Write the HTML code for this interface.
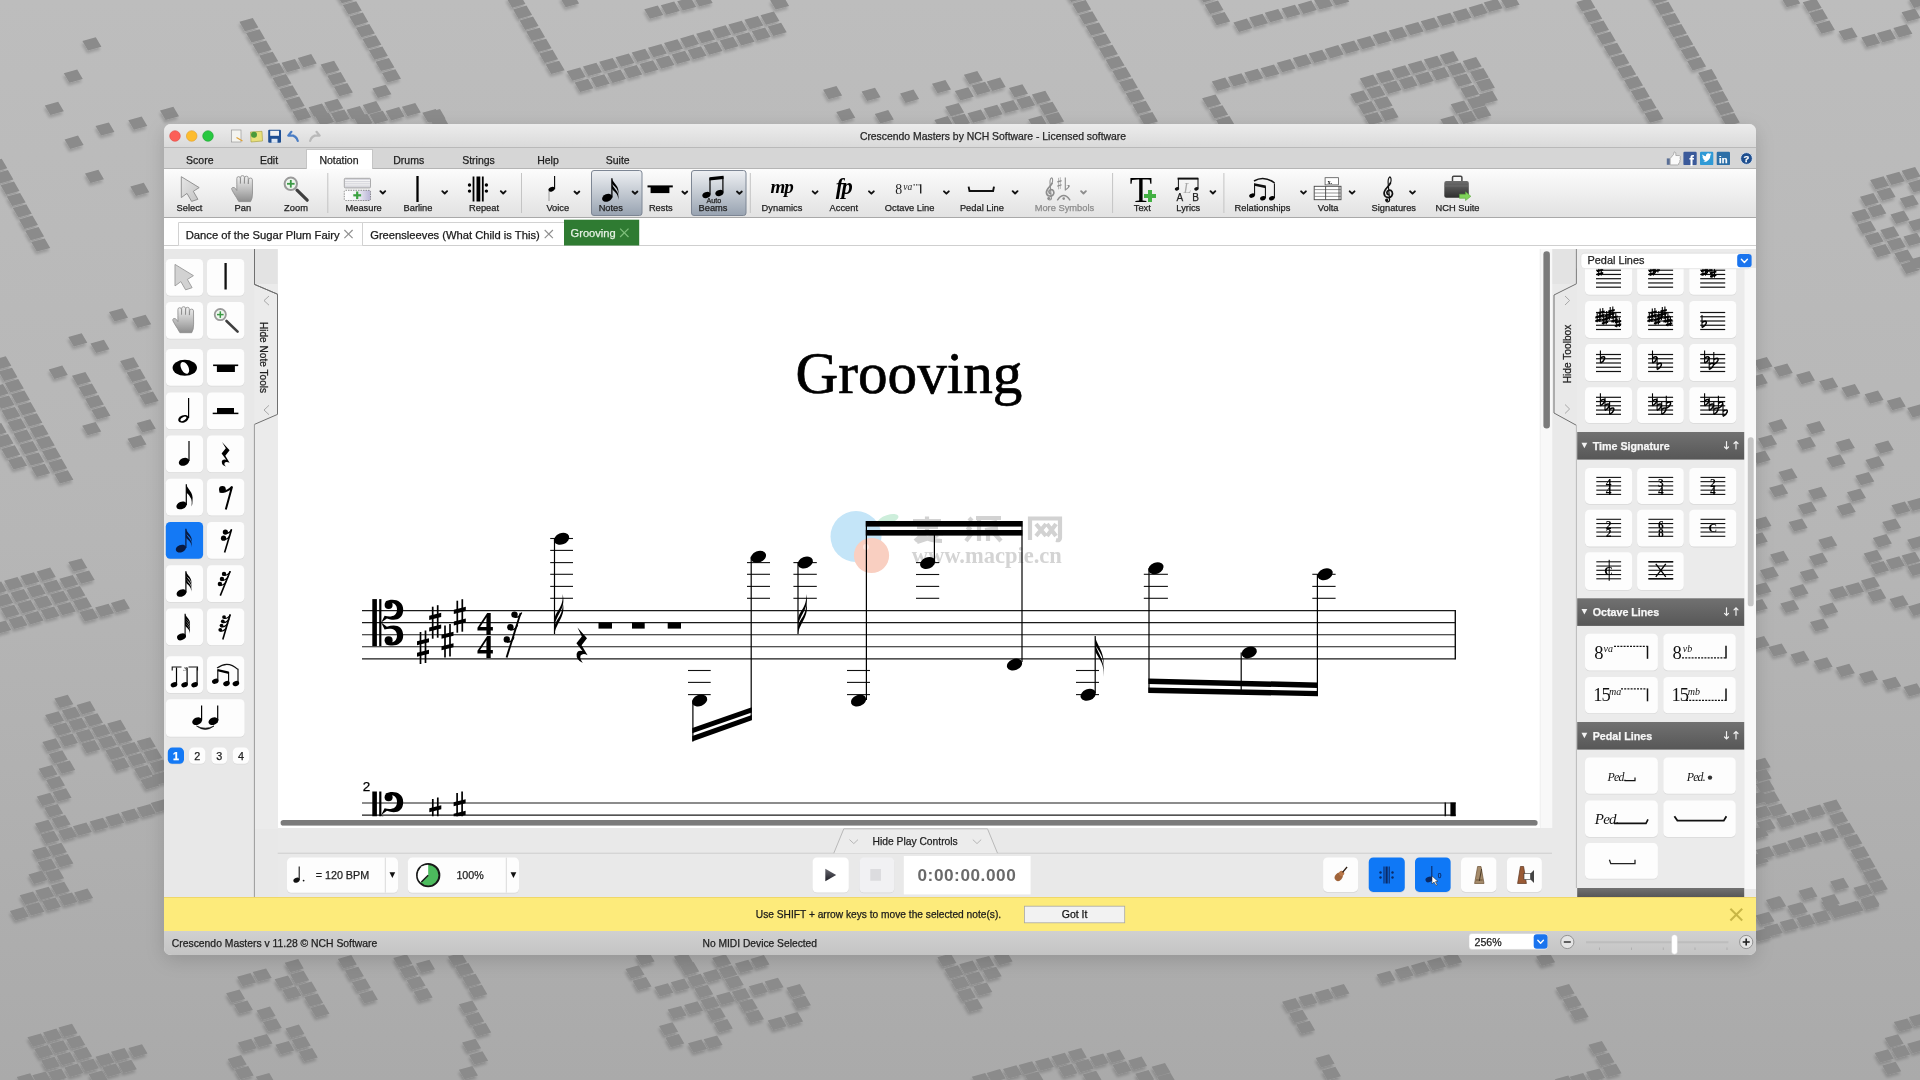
<!DOCTYPE html>
<html><head><meta charset="utf-8"><style>html,body{margin:0;padding:0;width:1920px;height:1080px;overflow:hidden;background:#b9b9b9}svg{display:block}text{white-space:pre}</style></head><body>
<svg width="1920" height="1080" viewBox="0 0 1920 1080" font-family="Liberation Sans"><defs><linearGradient id="gBg" x1="0" y1="0" x2="0" y2="1"><stop offset="0" stop-color="#bdbdbd"/><stop offset="0.5" stop-color="#b6b6b6"/><stop offset="1" stop-color="#aaaaaa"/></linearGradient>
<linearGradient id="gBgV" x1="0" y1="0" x2="0" y2="1"><stop offset="0" stop-color="#000" stop-opacity="0"/><stop offset="0.7" stop-color="#000" stop-opacity="0.03"/><stop offset="1" stop-color="#000" stop-opacity="0.16"/></linearGradient>
<filter id="sqsh" x="-50%" y="-50%" width="200%" height="200%"><feGaussianBlur in="SourceAlpha" stdDeviation="1.6"/><feOffset dx="-1" dy="2.5"/><feComponentTransfer><feFuncA type="linear" slope="0.18"/></feComponentTransfer><feMerge><feMergeNode/><feMergeNode in="SourceGraphic"/></feMerge></filter>
<linearGradient id="gTitle" x1="0" y1="0" x2="0" y2="1"><stop offset="0" stop-color="#ececec"/><stop offset="1" stop-color="#dadada"/></linearGradient>
<linearGradient id="gTool" x1="0" y1="0" x2="0" y2="1"><stop offset="0" stop-color="#fcfcfc"/><stop offset="1" stop-color="#e2e2e2"/></linearGradient>
<linearGradient id="gStatus" x1="0" y1="0" x2="0" y2="1"><stop offset="0" stop-color="#d0d0d0"/><stop offset="1" stop-color="#c4c4c4"/></linearGradient>
<filter id="wshadow" x="-10%" y="-10%" width="120%" height="130%"><feGaussianBlur in="SourceAlpha" stdDeviation="10"/><feOffset dy="5"/><feComponentTransfer><feFuncA type="linear" slope="0.15"/></feComponentTransfer><feMerge><feMergeNode/><feMergeNode in="SourceGraphic"/></feMerge></filter>
<clipPath id="winclip"><rect x="164" y="124" width="1592" height="831" rx="7"/></clipPath>
<linearGradient id="gSel" x1="0" y1="0" x2="0" y2="1"><stop offset="0" stop-color="#eef0f3"/><stop offset="1" stop-color="#98a3b1"/></linearGradient>
<linearGradient id="gArrow" x1="0" y1="0" x2="1" y2="1"><stop offset="0" stop-color="#e6e6e6"/><stop offset="1" stop-color="#c4c4c4"/></linearGradient>
<linearGradient id="gHand" x1="0" y1="0" x2="0" y2="1"><stop offset="0" stop-color="#f4f4f4"/><stop offset="1" stop-color="#8e8e8e"/></linearGradient>
<linearGradient id="gBrief" x1="0" y1="0" x2="0" y2="1"><stop offset="0" stop-color="#6d6d6d"/><stop offset="1" stop-color="#2e2e2e"/></linearGradient>
<linearGradient id="gMeas" x1="0" y1="0" x2="1" y2="0"><stop offset="0" stop-color="#ffffff"/><stop offset=".5" stop-color="#f2f2f6"/><stop offset="1" stop-color="#b8b4d6"/></linearGradient>
<linearGradient id="gLogoB" x1="0" y1="0" x2="1" y2="1"><stop offset="0" stop-color="#c4e6f8"/><stop offset="1" stop-color="#b5def6"/></linearGradient>
<clipPath id="clipScore"><rect x="278" y="249" width="1262" height="567.2"/></clipPath>
<linearGradient id="gHdr" x1="0" y1="0" x2="0" y2="1"><stop offset="0" stop-color="#717171"/><stop offset="1" stop-color="#575757"/></linearGradient>
<linearGradient id="gPlay" x1="0" y1="0" x2="0" y2="1"><stop offset="0" stop-color="#6a6a72"/><stop offset="1" stop-color="#1c1c24"/></linearGradient></defs>
<rect x="0" y="0" width="1920" height="1080" fill="url(#gBg)"/>
<path d="M82.4 40.9L95.8 37.2L101.4 46.7L88.0 50.4ZM63.8 73.2L77.2 69.5L82.8 79.0L69.4 82.7ZM44.8 105.4L58.2 101.7L63.8 111.2L50.4 114.9ZM160.0 110.4L173.4 106.7L179.0 116.2L165.6 119.9ZM128.3 120.3L141.7 116.6L147.3 126.1L133.9 129.8ZM95.5 126.1L108.9 122.4L114.5 131.9L101.1 135.6ZM239.4 21.8L252.8 18.0L258.4 27.5L244.9 31.3ZM246.0 33.0L259.5 29.2L265.0 38.7L251.6 42.5ZM252.6 44.2L266.1 40.5L271.6 49.9L258.2 53.7ZM259.2 55.4L272.7 51.7L278.2 61.2L264.8 64.9ZM265.9 66.6L279.3 62.9L284.9 72.4L271.4 76.1ZM272.5 77.9L285.9 74.1L291.5 83.6L278.0 87.3ZM279.1 89.1L292.5 85.3L298.1 94.8L284.7 98.6ZM285.7 100.3L299.2 96.5L304.7 106.0L291.3 109.8ZM292.3 111.5L305.8 107.7L311.3 117.2L297.9 121.0ZM281.5 62.7L295.0 59.0L300.5 68.4L287.1 72.2ZM297.8 57.9L311.2 54.1L316.7 63.6L303.3 67.4ZM320.6 64.5L334.1 60.8L339.6 70.3L326.2 74.0ZM327.2 75.7L340.7 71.9L346.2 81.4L332.8 85.2ZM333.9 86.8L347.3 83.0L352.9 92.5L339.4 96.3ZM336.3 -6.2L349.7 -10.0L355.3 -0.5L341.8 3.3ZM342.8 5.1L356.2 1.3L361.8 10.8L348.4 14.6ZM349.3 16.4L362.8 12.6L368.3 22.1L354.9 25.9ZM355.9 27.7L369.3 23.9L374.9 33.4L361.4 37.2ZM362.4 39.0L375.8 35.2L381.4 44.7L368.0 48.5ZM368.9 50.3L382.4 46.6L387.9 56.1L374.5 59.8ZM375.5 61.7L388.9 57.9L394.5 67.4L381.0 71.1ZM382.0 73.0L395.4 69.2L401.0 78.7L387.6 82.5ZM372.4 88.6L385.8 84.8L391.4 94.3L377.9 98.1ZM308.6 107.3L322.0 103.5L327.6 113.0L314.1 116.8ZM324.2 102.5L337.7 98.7L343.2 108.2L329.8 111.9ZM346.5 109.7L359.9 105.9L365.5 115.4L352.0 119.2ZM362.8 104.9L376.2 101.1L381.7 110.6L368.3 114.3ZM385.6 110.9L399.1 107.1L404.6 116.6L391.2 120.4ZM401.9 106.7L415.3 102.9L420.8 112.4L407.4 116.2ZM422.3 112.7L435.8 108.9L441.3 118.4L427.9 122.2ZM315.2 116.3L328.7 112.5L334.2 122.0L320.8 125.8ZM330.9 113.3L344.3 109.5L349.8 119.0L336.4 122.8ZM353.7 117.5L367.2 113.7L372.7 123.2L359.3 127.0ZM369.4 114.5L382.8 110.7L388.4 120.2L374.9 124.0ZM506.6 -1.7L520.0 -5.4L525.5 4.1L512.1 7.8ZM513.1 9.4L526.5 5.6L532.1 15.1L518.6 18.9ZM519.6 20.4L533.0 16.6L538.6 26.1L525.1 29.9ZM526.1 31.4L539.6 27.7L545.1 37.2L531.7 40.9ZM532.6 42.5L546.1 38.7L551.6 48.2L538.2 52.0ZM539.2 53.5L552.6 49.7L558.1 59.2L544.7 63.0ZM545.7 64.5L559.1 60.8L564.7 70.3L551.2 74.0ZM566.7 71.2L580.2 67.4L585.7 76.9L572.3 80.7ZM583.0 66.5L596.4 62.7L602.0 72.2L588.5 76.0ZM599.2 61.8L612.7 58.1L618.2 67.5L604.8 71.3ZM615.5 57.2L628.9 53.4L634.5 62.9L621.0 66.7ZM631.7 52.5L645.2 48.7L650.7 58.2L637.3 62.0ZM574.6 82.6L588.0 78.8L593.5 88.3L580.1 92.1ZM590.8 78.0L604.2 74.2L609.8 83.7L596.3 87.5ZM607.1 73.4L620.5 69.6L626.0 79.1L612.6 82.9ZM623.3 68.8L636.7 65.0L642.3 74.5L628.8 78.2ZM560.1 -2.3L573.6 -6.0L579.1 3.5L565.7 7.2ZM426.5 112.7L440.0 108.9L445.5 118.4L432.1 122.2ZM430.7 121.1L444.2 117.3L449.7 126.8L436.3 130.6ZM648.0 47.7L661.4 43.9L666.9 53.4L653.5 57.2ZM664.0 43.0L677.5 39.3L683.0 48.8L669.6 52.5ZM680.1 38.4L693.5 34.6L699.1 44.1L685.7 47.9ZM696.2 33.8L709.6 30.0L715.2 39.5L701.7 43.3ZM712.3 29.1L725.7 25.3L731.2 34.8L717.8 38.6ZM728.3 24.5L741.8 20.7L747.3 30.2L733.9 34.0ZM744.4 19.8L757.9 16.1L763.4 25.6L750.0 29.3ZM760.5 15.2L773.9 11.4L779.5 20.9L766.0 24.7ZM639.5 63.9L653.0 60.2L658.5 69.7L645.1 73.4ZM655.6 59.3L669.0 55.5L674.5 65.0L661.1 68.8ZM671.6 54.6L685.0 50.8L690.6 60.3L677.1 64.1ZM687.6 49.9L701.0 46.2L706.6 55.7L693.1 59.4ZM703.6 45.3L717.1 41.5L722.6 51.0L709.2 54.8ZM719.6 40.6L733.1 36.8L738.6 46.3L725.2 50.1ZM735.7 36.0L749.1 32.2L754.6 41.7L741.2 45.4ZM751.7 31.3L765.1 27.5L770.7 37.0L757.2 40.8ZM767.7 26.6L781.1 22.8L786.7 32.3L773.3 36.1ZM644.3 9.2L657.8 5.4L663.3 14.9L649.9 18.7ZM660.8 5.2L674.2 1.4L679.8 10.9L666.3 14.7ZM677.2 1.2L690.7 -2.6L696.2 6.9L682.8 10.6ZM693.7 -2.9L707.1 -6.6L712.7 2.9L699.2 6.6ZM770.1 0.2L783.6 -3.6L789.1 5.9L775.7 9.6ZM823.1 89.8L836.5 86.0L842.1 95.5L828.6 99.3ZM836.3 112.1L849.7 108.3L855.3 117.8L841.9 121.6ZM861.6 91.6L875.0 87.8L880.6 97.3L867.1 101.1ZM900.1 93.4L913.5 89.6L919.1 99.1L905.6 102.9ZM932.0 83.8L945.4 80.0L951.0 89.5L937.5 93.3ZM874.8 113.9L888.2 110.1L893.8 119.6L880.4 123.4ZM963.9 74.8L977.3 71.0L982.9 80.5L969.4 84.3ZM954.8 91.0L968.3 87.2L973.8 96.7L960.4 100.5ZM971.7 85.6L985.1 81.8L990.7 91.3L977.2 95.1ZM986.7 81.4L1000.2 77.6L1005.7 87.1L992.3 90.9ZM1009.0 88.0L1022.4 84.2L1028.0 93.7L1014.5 97.5ZM1031.9 94.6L1045.3 90.8L1050.8 100.3L1037.4 104.1ZM945.2 106.7L958.7 102.9L964.2 112.4L950.8 116.2ZM1016.2 99.4L1029.7 95.7L1035.2 105.2L1021.8 108.9ZM1039.1 105.5L1052.5 101.7L1058.1 111.2L1044.6 115.0ZM967.5 113.3L980.9 109.5L986.5 119.0L973.0 122.8ZM983.7 108.5L997.2 104.7L1002.7 114.2L989.3 118.0ZM1000.0 103.7L1013.4 99.9L1019.0 109.4L1005.5 113.1ZM951.2 117.5L964.7 113.7L970.2 123.2L956.8 127.0ZM1045.1 115.7L1058.5 111.9L1064.1 121.4L1050.6 125.2ZM934.4 119.9L947.8 116.1L953.4 125.6L939.9 129.4ZM1028.3 119.3L1041.7 115.5L1047.2 125.0L1033.8 128.8ZM1065.6 -7.4L1079.0 -11.2L1084.5 -1.7L1071.1 2.1ZM1072.2 3.8L1085.7 -0.0L1091.2 9.5L1077.8 13.3ZM1078.9 15.0L1092.3 11.2L1097.9 20.7L1084.4 24.4ZM1085.6 26.1L1099.0 22.4L1104.6 31.9L1091.1 35.6ZM1092.2 37.3L1105.7 33.6L1111.2 43.1L1097.8 46.8ZM1098.9 48.5L1112.4 44.8L1117.9 54.2L1104.5 58.0ZM1105.6 59.7L1119.0 55.9L1124.6 65.4L1111.1 69.2ZM1112.3 70.9L1125.7 67.1L1131.3 76.6L1117.8 80.4ZM1118.9 82.1L1132.4 78.3L1137.9 87.8L1124.5 91.6ZM1125.6 93.3L1139.1 89.5L1144.6 99.0L1131.2 102.8ZM1132.3 104.5L1145.7 100.7L1151.3 110.2L1137.8 114.0ZM1139.0 115.7L1152.4 111.9L1157.9 121.4L1144.5 125.2ZM1197.9 -7.1L1211.4 -10.8L1216.9 -1.4L1203.5 2.4ZM1204.6 4.4L1218.0 0.6L1223.5 10.1L1210.1 13.9ZM1211.2 15.8L1224.6 12.0L1230.2 21.5L1216.7 25.3ZM1233.4 22.4L1246.9 18.6L1252.4 28.1L1239.0 31.9ZM1249.1 17.6L1262.5 13.8L1268.1 23.3L1254.6 27.1ZM1264.7 12.8L1278.2 9.0L1283.7 18.5L1270.3 22.3ZM1211.8 81.4L1225.2 77.6L1230.8 87.1L1217.3 90.9ZM1228.0 77.0L1241.5 73.2L1247.0 82.7L1233.6 86.5ZM1244.3 72.6L1257.7 68.8L1263.3 78.3L1249.8 82.1ZM1260.5 68.2L1274.0 64.4L1279.5 73.9L1266.1 77.6ZM1202.1 98.2L1215.6 94.5L1221.1 104.0L1207.7 107.7ZM1209.1 109.1L1222.5 105.3L1228.1 114.8L1214.6 118.6ZM1216.0 119.9L1229.4 116.1L1235.0 125.6L1221.5 129.4ZM1281.6 8.6L1295.0 4.8L1300.6 14.3L1287.1 18.1ZM1297.8 4.4L1311.3 0.6L1316.8 10.1L1303.4 13.9ZM1314.1 0.2L1327.5 -3.6L1333.0 5.9L1319.6 9.6ZM1330.3 -4.1L1343.8 -7.8L1349.3 1.7L1335.9 5.4ZM1276.8 62.7L1290.2 59.0L1295.7 68.4L1282.3 72.2ZM1292.8 58.1L1306.2 54.3L1311.7 63.8L1298.3 67.6ZM1308.7 53.5L1322.2 49.7L1327.7 59.2L1314.3 63.0ZM1324.7 48.9L1338.2 45.1L1343.7 54.6L1330.3 58.4ZM1340.7 44.3L1354.2 40.5L1359.7 50.0L1346.3 53.8ZM1356.7 39.7L1370.2 35.9L1375.7 45.4L1362.3 49.2ZM1372.7 35.1L1386.2 31.3L1391.7 40.8L1378.3 44.5ZM1388.7 30.4L1402.2 26.7L1407.7 36.2L1394.3 39.9ZM1404.7 25.8L1418.2 22.0L1423.7 31.5L1410.3 35.3ZM1420.7 21.2L1434.2 17.4L1439.7 26.9L1426.3 30.7ZM1436.7 16.6L1450.2 12.8L1455.7 22.3L1442.3 26.1ZM1452.7 12.0L1466.2 8.2L1471.7 17.7L1458.3 21.5ZM1468.7 7.4L1482.2 3.6L1487.7 13.1L1474.3 16.9ZM1359.8 78.4L1373.2 74.6L1378.8 84.1L1365.3 87.9ZM1375.8 73.7L1389.2 69.9L1394.8 79.4L1381.3 83.2ZM1391.8 69.0L1405.2 65.2L1410.8 74.7L1397.4 78.5ZM1407.8 64.3L1421.3 60.5L1426.8 70.0L1413.4 73.8ZM1423.8 59.6L1437.3 55.8L1442.8 65.3L1429.4 69.1ZM1439.8 54.9L1453.3 51.1L1458.8 60.6L1445.4 64.4ZM1382.7 84.4L1396.1 80.6L1401.6 90.1L1388.2 93.9ZM1398.8 79.9L1412.2 76.1L1417.7 85.6L1404.3 89.4ZM1414.9 75.4L1428.3 71.6L1433.8 81.1L1420.4 84.9ZM1431.0 70.9L1444.4 67.1L1449.9 76.6L1436.5 80.4ZM1447.1 66.3L1460.5 62.6L1466.0 72.1L1452.6 75.8ZM1462.7 60.9L1476.1 57.1L1481.7 66.6L1468.2 70.4ZM1469.9 71.8L1483.4 68.0L1488.9 77.5L1475.5 81.3ZM1475.9 82.0L1489.4 78.2L1494.9 87.7L1481.5 91.5ZM1453.1 77.2L1466.5 73.4L1472.1 82.9L1458.6 86.7ZM1460.3 88.6L1473.7 84.8L1479.3 94.3L1465.8 98.1ZM1466.9 99.4L1480.3 95.7L1485.9 105.2L1472.5 108.9ZM1472.3 109.7L1485.8 105.9L1491.3 115.4L1477.9 119.2ZM1450.7 104.3L1464.1 100.5L1469.6 110.0L1456.2 113.7ZM1457.9 114.5L1471.3 110.7L1476.9 120.2L1463.4 124.0ZM1440.4 119.3L1453.9 115.5L1459.4 125.0L1446.0 128.8ZM1478.9 94.6L1492.4 90.8L1497.9 100.3L1484.5 104.1ZM1350.2 94.0L1363.6 90.2L1369.2 99.7L1355.7 103.5ZM1366.4 89.2L1379.9 85.4L1385.4 94.9L1372.0 98.7ZM1358.0 104.9L1371.4 101.1L1377.0 110.6L1363.5 114.3ZM1373.6 100.0L1387.1 96.3L1392.6 105.8L1379.2 109.5ZM1364.0 115.7L1377.4 111.9L1383.0 121.4L1369.6 125.2ZM1379.7 111.5L1393.1 107.7L1398.6 117.2L1385.2 121.0ZM1483.7 2.6L1497.2 -1.2L1502.7 8.3L1489.3 12.1ZM1500.6 -1.1L1514.0 -4.8L1519.6 4.7L1506.1 8.4ZM1576.4 2.0L1589.9 -1.8L1595.4 7.7L1582.0 11.5ZM1583.2 13.1L1596.7 9.3L1602.2 18.8L1588.8 22.6ZM1590.0 24.2L1603.5 20.4L1609.0 29.9L1595.6 33.7ZM1596.8 35.4L1610.3 31.6L1615.8 41.1L1602.4 44.8ZM1603.6 46.5L1617.1 42.7L1622.6 52.2L1609.2 56.0ZM1610.4 57.6L1623.9 53.8L1629.4 63.3L1616.0 67.1ZM1617.2 68.8L1630.7 65.0L1636.2 74.5L1622.8 78.2ZM1624.0 79.9L1637.5 76.1L1643.0 85.6L1629.6 89.4ZM1630.8 91.0L1644.3 87.2L1649.8 96.7L1636.4 100.5ZM1637.6 102.1L1651.1 98.4L1656.6 107.9L1643.2 111.6ZM1644.4 113.3L1657.9 109.5L1663.4 119.0L1650.0 122.8ZM1648.6 -5.5L1662.1 -9.3L1667.6 0.2L1654.2 4.0ZM1655.0 5.6L1668.5 1.8L1674.0 11.3L1660.6 15.1ZM1661.5 16.6L1674.9 12.9L1680.4 22.4L1667.0 26.1ZM1667.9 27.7L1681.3 23.9L1686.9 33.4L1673.4 37.2ZM1674.3 38.8L1687.7 35.0L1693.3 44.5L1679.8 48.3ZM1680.7 49.9L1694.2 46.1L1699.7 55.6L1686.3 59.3ZM1687.1 60.9L1700.6 57.1L1706.1 66.6L1692.7 70.4ZM1698.1 72.7L1711.6 68.9L1717.1 78.4L1703.7 82.2ZM1703.8 83.7L1717.3 80.0L1722.8 89.5L1709.4 93.2ZM1709.5 94.8L1722.9 91.0L1728.5 100.5L1715.0 104.3ZM1715.1 105.8L1728.6 102.0L1734.1 111.5L1720.7 115.3ZM1720.8 116.8L1734.3 113.0L1739.8 122.5L1726.4 126.3ZM1781.3 -2.2L1794.7 -6.0L1800.3 3.5L1786.8 7.3ZM1802.7 2.2L1816.1 -1.6L1821.7 7.9L1808.2 11.7ZM1809.0 12.9L1822.4 9.1L1828.0 18.6L1814.5 22.4ZM1815.9 24.2L1829.4 20.4L1834.9 29.9L1821.5 33.7ZM1838.6 31.2L1852.0 27.4L1857.6 36.9L1844.1 40.6ZM1861.3 37.5L1874.7 33.7L1880.2 43.2L1866.8 46.9ZM1877.0 33.0L1890.4 29.3L1896.0 38.8L1882.5 42.5ZM1893.4 28.0L1906.8 24.2L1912.4 33.7L1898.9 37.5ZM1901.6 12.3L1915.0 8.5L1920.5 18.0L1907.1 21.8ZM1908.5 -1.6L1921.9 -5.4L1927.5 4.1L1914.0 7.9ZM64.6 139.4L78.0 135.6L83.6 145.1L70.1 148.9ZM85.0 173.6L98.4 169.8L103.9 179.3L90.5 183.1ZM130.3 186.6L143.8 182.8L149.3 192.3L135.9 196.1ZM-11.7 162.5L1.7 158.7L7.3 168.2L-6.2 172.0ZM-5.6 173.9L7.9 170.1L13.4 179.6L-0.0 183.4ZM0.6 185.3L14.0 181.5L19.5 191.0L6.1 194.8ZM6.7 196.6L20.1 192.9L25.7 202.4L12.2 206.1ZM12.8 208.0L26.3 204.2L31.8 213.7L18.4 217.5ZM19.0 219.4L32.4 215.6L38.0 225.1L24.5 228.9ZM25.1 230.8L38.6 227.0L44.1 236.5L30.7 240.3ZM31.2 242.1L44.7 238.4L50.2 247.9L36.8 251.6ZM109.0 312.0L122.5 308.2L128.0 317.7L114.6 321.5ZM132.2 318.4L145.6 314.7L151.2 324.2L137.7 327.9ZM68.3 337.0L81.7 333.2L87.3 342.7L73.8 346.5ZM90.5 343.4L103.9 339.7L109.5 349.2L96.1 352.9ZM48.8 369.4L62.3 365.6L67.8 375.1L54.4 378.9ZM82.2 425.8L95.6 422.1L101.2 431.6L87.7 435.3ZM136.8 423.1L150.2 419.3L155.8 428.8L142.3 432.6ZM127.5 438.8L141.0 435.0L146.5 444.5L133.1 448.3ZM72.0 375.8L85.4 372.1L91.0 381.6L77.5 385.3ZM78.5 387.3L91.9 383.5L97.5 393.0L84.0 396.8ZM85.0 398.7L98.4 394.9L103.9 404.4L90.5 408.2ZM91.4 410.1L104.9 406.3L110.4 415.8L97.0 419.6ZM120.1 361.0L133.6 357.3L139.1 366.7L125.7 370.5ZM126.6 372.5L140.1 368.7L145.6 378.2L132.2 381.9ZM133.1 383.9L146.5 380.1L152.1 389.6L138.6 393.4ZM139.6 395.3L153.0 391.5L158.6 401.0L145.1 404.8ZM-7.6 360.1L5.8 356.3L11.3 365.8L-2.1 369.6ZM-1.4 371.5L12.0 367.7L17.5 377.2L4.1 381.0ZM4.8 382.9L18.2 379.1L23.8 388.6L10.3 392.4ZM11.0 394.3L24.4 390.5L30.0 400.0L16.5 403.8ZM17.2 405.7L30.6 401.9L36.2 411.4L22.7 415.2ZM23.4 417.1L36.8 413.3L42.4 422.8L28.9 426.5ZM29.6 428.4L43.0 424.7L48.6 434.2L35.1 437.9ZM35.8 439.8L49.2 436.0L54.8 445.5L41.3 449.3ZM42.0 451.2L55.4 447.4L61.0 456.9L47.5 460.7ZM48.2 462.6L61.6 458.8L67.2 468.3L53.7 472.1ZM54.4 474.0L67.8 470.2L73.4 479.7L59.9 483.5ZM-10.4 387.9L3.0 384.1L8.6 393.6L-4.9 397.4ZM-4.5 399.3L9.0 395.5L14.5 405.0L1.1 408.8ZM1.5 410.6L14.9 406.9L20.5 416.3L7.0 420.1ZM7.4 422.0L20.9 418.2L26.4 427.7L13.0 431.5ZM13.4 433.4L26.8 429.6L32.4 439.1L18.9 442.9ZM19.3 444.8L32.8 441.0L38.3 450.5L24.9 454.3ZM25.3 456.1L38.7 452.4L44.3 461.9L30.8 465.6ZM31.2 467.5L44.7 463.7L50.2 473.2L36.8 477.0ZM-12.3 426.8L1.2 423.0L6.7 432.5L-6.7 436.3ZM-5.5 437.9L8.0 434.1L13.5 443.6L0.1 447.4ZM1.3 449.0L14.8 445.2L20.3 454.7L6.9 458.5ZM8.1 460.1L21.5 456.3L27.1 465.8L13.6 469.6ZM36.8 571.4L50.2 567.6L55.8 577.1L42.3 580.9ZM20.4 576.0L33.9 572.3L39.4 581.7L26.0 585.5ZM4.1 580.7L17.5 576.9L23.1 586.4L9.6 590.2ZM-12.3 585.3L1.2 581.5L6.7 591.0L-6.7 594.8ZM75.7 574.2L89.1 570.4L94.7 579.9L81.2 583.7ZM59.4 578.8L72.8 575.0L78.4 584.5L64.9 588.3ZM43.1 583.4L56.5 579.7L62.1 589.2L48.6 592.9ZM26.8 588.1L40.2 584.3L45.8 593.8L32.3 597.6ZM10.5 592.7L23.9 588.9L29.5 598.4L16.1 602.2ZM-5.8 597.3L7.7 593.5L13.2 603.0L-0.2 606.8ZM66.4 589.9L79.9 586.1L85.4 595.6L72.0 599.4ZM50.0 594.6L63.4 590.8L69.0 600.3L55.5 604.0ZM33.6 599.2L47.0 595.4L52.5 604.9L39.1 608.7ZM17.1 603.8L30.6 600.0L36.1 609.5L22.7 613.3ZM0.7 608.4L14.1 604.7L19.7 614.2L6.2 617.9ZM72.9 601.0L86.4 597.3L91.9 606.7L78.5 610.5ZM56.8 605.7L70.2 601.9L75.8 611.4L62.3 615.2ZM40.7 610.3L54.1 606.5L59.7 616.0L46.2 619.8ZM24.6 614.9L38.0 611.1L43.6 620.6L30.1 624.4ZM8.5 619.6L21.9 615.8L27.5 625.3L14.0 629.0ZM-7.6 624.2L5.8 620.4L11.3 629.9L-2.1 633.7ZM79.4 612.1L92.8 608.4L98.4 617.9L84.9 621.6ZM95.1 607.5L108.6 603.7L114.1 613.2L100.7 617.0ZM110.9 602.9L124.3 599.1L129.9 608.6L116.4 612.4ZM68.3 562.1L81.7 558.4L87.3 567.9L73.8 571.6ZM54.4 698.4L67.8 694.7L73.4 704.2L59.9 707.9ZM45.1 715.1L58.6 711.3L64.1 720.8L50.7 724.6ZM61.8 710.5L75.2 706.7L80.8 716.2L67.3 720.0ZM76.6 704.9L90.1 701.1L95.6 710.6L82.2 714.4ZM52.5 726.2L66.0 722.4L71.5 731.9L58.1 735.7ZM68.3 721.6L81.7 717.8L87.3 727.3L73.8 731.1ZM84.0 717.0L97.5 713.2L103.0 722.7L89.6 726.5ZM59.0 737.3L72.5 733.5L78.0 743.0L64.6 746.8ZM75.7 732.7L89.1 728.9L94.7 738.4L81.2 742.2ZM91.4 728.1L104.9 724.3L110.4 733.8L97.0 737.6ZM107.2 723.4L120.6 719.7L126.2 729.2L112.7 732.9ZM81.2 743.8L94.7 740.0L100.2 749.5L86.8 753.3ZM97.9 739.2L111.4 735.4L116.9 744.9L103.5 748.7ZM113.7 734.6L127.1 730.8L132.6 740.3L119.2 744.0ZM105.3 750.3L118.8 746.5L124.3 756.0L110.9 759.8ZM121.1 745.7L134.5 741.9L140.0 751.4L126.6 755.2ZM136.8 741.0L150.2 737.3L155.8 746.7L142.3 750.5ZM110.9 761.4L124.3 757.6L129.9 767.1L116.4 770.9ZM127.5 756.8L141.0 753.0L146.5 762.5L133.1 766.3ZM143.3 752.1L156.7 748.4L162.3 757.9L148.8 761.6ZM134.0 768.8L147.5 765.0L153.0 774.5L139.6 778.3ZM149.8 763.3L163.2 759.5L168.8 769.0L155.3 772.7ZM140.5 779.9L153.9 776.1L159.5 785.6L146.1 789.4ZM151.6 775.3L165.1 771.5L170.6 781.0L157.2 784.8ZM42.4 742.0L55.8 738.2L61.3 747.7L47.9 751.5ZM48.8 754.0L62.3 750.2L67.8 759.7L54.4 763.5ZM56.2 764.2L69.7 760.4L75.2 769.9L61.8 773.7ZM38.7 768.8L52.1 765.0L57.6 774.5L44.2 778.3ZM46.1 779.9L59.5 776.1L65.0 785.6L51.6 789.4ZM52.5 792.0L66.0 788.2L71.5 797.7L58.1 801.5ZM36.8 796.6L50.2 792.8L55.8 802.3L42.3 806.1ZM44.2 807.7L57.7 803.9L63.2 813.4L49.8 817.2ZM35.0 823.4L48.4 819.7L53.9 829.2L40.5 832.9ZM51.6 818.8L65.1 815.0L70.6 824.5L57.2 828.3ZM40.5 834.6L53.9 830.8L59.5 840.3L46.1 844.0ZM32.2 850.3L45.6 846.5L51.2 856.0L37.7 859.8ZM47.9 846.6L61.4 842.8L66.9 852.3L53.5 856.1ZM37.7 862.3L51.2 858.5L56.7 868.0L43.3 871.8ZM54.4 857.7L67.8 853.9L73.4 863.4L59.9 867.2ZM28.5 874.4L41.9 870.6L47.5 880.1L34.0 883.9ZM45.1 872.5L58.6 868.7L64.1 878.2L50.7 882.0ZM58.1 830.8L71.5 827.1L77.1 836.6L63.6 840.3ZM72.9 826.2L86.4 822.4L91.9 831.9L78.5 835.7ZM89.6 821.6L103.0 817.8L108.6 827.3L95.1 831.1ZM105.3 817.0L118.8 813.2L124.3 822.7L110.9 826.5ZM121.1 812.3L134.5 808.5L140.0 818.0L126.6 821.8ZM136.8 807.7L150.2 803.9L155.8 813.4L142.3 817.2ZM150.7 803.1L164.1 799.3L169.7 808.8L156.2 812.6ZM50.8 885.6L64.2 881.8L69.8 891.3L56.3 895.1ZM35.2 890.5L48.7 886.7L54.2 896.2L40.8 900.0ZM19.7 895.3L33.1 891.6L38.7 901.0L25.2 904.8ZM58.5 896.3L72.0 892.5L77.5 902.0L64.1 905.8ZM42.0 901.2L55.5 897.4L61.0 906.9L47.6 910.7ZM25.5 906.0L38.9 902.2L44.5 911.7L31.0 915.5ZM9.9 910.9L23.4 907.1L28.9 916.6L15.5 920.4ZM74.1 892.4L87.5 888.6L93.1 898.1L79.6 901.9ZM58.5 1027.5L72.0 1023.7L77.5 1033.2L64.1 1037.0ZM43.0 1032.4L56.4 1028.6L62.0 1038.1L48.5 1041.9ZM27.4 1037.2L40.9 1033.5L46.4 1043.0L33.0 1046.7ZM66.3 1039.2L79.8 1035.4L85.3 1044.9L71.9 1048.7ZM49.8 1044.0L63.2 1040.3L68.8 1049.8L55.3 1053.5ZM34.2 1048.9L47.7 1045.1L53.2 1054.6L39.8 1058.4ZM73.1 1050.9L86.6 1047.1L92.1 1056.6L78.7 1060.3ZM56.6 1055.7L70.0 1051.9L75.6 1061.4L62.1 1065.2ZM41.1 1060.6L54.5 1056.8L60.0 1066.3L46.6 1070.1ZM95.5 1056.7L108.9 1052.9L114.5 1062.4L101.0 1066.2ZM111.0 1051.8L124.5 1048.0L130.0 1057.5L116.6 1061.3ZM128.5 1047.9L142.0 1044.2L147.5 1053.6L134.1 1057.4ZM79.9 1062.5L93.4 1058.7L98.9 1068.2L85.5 1072.0ZM64.4 1067.4L77.8 1063.6L83.4 1073.1L69.9 1076.9ZM47.9 1072.2L61.3 1068.5L66.8 1077.9L53.4 1081.7ZM102.3 1067.4L115.7 1063.6L121.3 1073.1L107.8 1076.9ZM117.8 1063.5L131.3 1059.7L136.8 1069.2L123.4 1073.0ZM32.3 1075.2L45.7 1071.4L51.3 1080.9L37.8 1084.6ZM16.8 1077.1L30.2 1073.3L35.7 1082.8L22.3 1086.6ZM88.7 1074.2L102.1 1070.4L107.7 1079.9L94.2 1083.7ZM237.1 976.8L250.5 973.1L256.1 982.5L242.6 986.3ZM252.7 972.1L266.1 968.4L271.7 977.9L258.2 981.6ZM226.1 993.2L239.6 989.5L245.1 998.9L231.7 1002.7ZM233.9 1004.2L247.4 1000.4L252.9 1009.9L239.5 1013.7ZM284.7 962.8L298.2 959.0L303.7 968.5L290.3 972.3ZM274.6 979.2L288.0 975.4L293.6 984.9L280.1 988.7ZM290.2 974.5L303.6 970.7L309.2 980.2L295.7 984.0ZM282.4 990.1L295.8 986.3L301.4 995.8L287.9 999.6ZM298.0 985.4L311.4 981.6L317.0 991.1L303.6 994.9ZM304.3 997.1L317.7 993.4L323.2 1002.9L309.8 1006.6ZM310.5 1008.1L323.9 1004.3L329.5 1013.8L316.1 1017.6ZM256.6 1010.4L270.0 1006.6L275.6 1016.1L262.1 1019.9ZM262.9 1022.1L276.3 1018.4L281.8 1027.9L268.4 1031.6ZM285.5 1028.4L298.9 1024.6L304.5 1034.1L291.1 1037.9ZM237.9 1042.5L251.3 1038.7L256.8 1048.2L243.4 1051.9ZM253.5 1037.8L266.9 1034.0L272.5 1043.5L259.0 1047.3ZM275.4 1044.8L288.8 1041.0L294.3 1050.5L280.9 1054.3ZM291.8 1040.1L305.2 1036.3L310.7 1045.8L297.3 1049.6ZM298.8 1051.8L312.2 1048.1L317.8 1057.5L304.3 1061.3ZM227.7 1058.9L241.1 1055.1L246.7 1064.6L233.2 1068.4ZM234.7 1069.8L248.2 1066.0L253.7 1075.5L240.3 1079.3ZM255.8 1076.8L269.3 1073.1L274.8 1082.5L261.4 1086.3ZM337.9 958.9L351.3 955.1L356.8 964.6L343.4 968.4ZM344.9 970.6L358.3 966.8L363.9 976.3L350.4 980.1ZM351.9 982.3L365.4 978.5L370.9 988.0L357.5 991.8ZM358.9 994.0L372.4 990.2L377.9 999.7L364.5 1003.5ZM393.3 958.1L406.8 954.3L412.3 963.8L398.9 967.6ZM399.6 969.0L413.0 965.2L418.6 974.7L405.1 978.5ZM406.6 980.0L420.0 976.2L425.6 985.7L412.1 989.4ZM413.6 991.7L427.1 987.9L432.6 997.4L419.2 1001.2ZM416.0 963.6L429.4 959.8L435.0 969.3L421.5 973.0ZM448.0 956.5L461.4 952.7L467.0 962.2L453.6 966.0ZM455.0 966.7L468.5 962.9L474.0 972.4L460.6 976.2ZM462.1 977.6L475.5 973.8L481.1 983.3L467.6 987.1ZM468.3 988.6L481.8 984.8L487.3 994.3L473.9 998.0ZM458.9 1004.2L472.4 1000.4L477.9 1009.9L464.5 1013.7ZM465.2 1015.9L478.6 1012.1L484.2 1021.6L470.7 1025.4ZM472.2 1026.8L485.7 1023.1L491.2 1032.5L477.8 1036.3ZM462.1 1042.5L475.5 1038.7L481.1 1048.2L467.6 1051.9ZM469.1 1055.0L482.5 1051.2L488.1 1060.7L474.6 1064.4ZM458.9 1069.8L472.4 1066.0L477.9 1075.5L464.5 1079.3ZM635.7 955.7L649.1 952.0L654.6 961.4L641.2 965.2ZM673.9 956.5L687.4 952.7L692.9 962.2L679.5 966.0ZM712.2 958.1L725.7 954.3L731.2 963.8L717.8 967.6ZM734.9 963.6L748.3 959.8L753.9 969.3L740.4 973.0ZM750.5 958.9L763.9 955.1L769.5 964.6L756.1 968.4ZM625.5 969.0L638.9 965.2L644.5 974.7L631.1 978.5ZM632.5 980.7L646.0 977.0L651.5 986.4L638.1 990.2ZM654.4 987.0L667.9 983.2L673.4 992.7L660.0 996.5ZM670.8 982.3L684.3 978.5L689.8 988.0L676.4 991.8ZM687.2 977.6L700.7 973.8L706.2 983.3L692.8 987.1ZM702.9 972.9L716.3 969.1L721.8 978.6L708.4 982.4ZM718.5 969.0L731.9 965.2L737.5 974.7L724.0 978.5ZM680.2 965.9L693.6 962.1L699.2 971.6L685.7 975.4ZM724.7 979.2L738.2 975.4L743.7 984.9L730.3 988.7ZM694.3 988.6L707.7 984.8L713.2 994.3L699.8 998.0ZM731.8 991.7L745.2 987.9L750.7 997.4L737.3 1001.2ZM716.1 995.6L729.6 991.8L735.1 1001.3L721.7 1005.1ZM748.9 986.2L762.4 982.4L767.9 991.9L754.5 995.7ZM764.6 981.5L778.0 977.7L783.6 987.2L770.1 991.0ZM786.4 987.8L799.9 984.0L805.4 993.5L792.0 997.3ZM791.9 999.5L805.4 995.7L810.9 1005.2L797.5 1009.0ZM667.7 1009.6L681.1 1005.9L686.7 1015.4L673.2 1019.1ZM684.1 1005.0L697.5 1001.2L703.1 1010.7L689.6 1014.4ZM700.5 1000.3L713.9 996.5L719.5 1006.0L706.1 1009.8ZM706.8 1011.2L720.2 1007.4L725.7 1016.9L712.3 1020.7ZM738.8 1002.6L752.2 998.8L757.8 1008.3L744.3 1012.1ZM745.0 1013.6L758.5 1009.8L764.0 1019.3L750.6 1023.0ZM767.7 1020.6L781.1 1016.8L786.7 1026.3L773.2 1030.1ZM784.1 1015.9L797.5 1012.1L803.1 1021.6L789.6 1025.4ZM659.1 1026.1L672.5 1022.3L678.1 1031.8L664.6 1035.5ZM665.4 1037.8L678.8 1034.0L684.3 1043.5L670.9 1047.3ZM688.0 1043.2L701.4 1039.5L707.0 1048.9L693.6 1052.7ZM703.6 1039.3L717.1 1035.6L722.6 1045.0L709.2 1048.8ZM713.8 1022.9L727.2 1019.1L732.8 1028.6L719.3 1032.4ZM937.4 957.3L950.8 953.5L956.4 963.0L942.9 966.8ZM944.4 969.0L957.9 965.2L963.4 974.7L950.0 978.5ZM950.7 980.0L964.1 976.2L969.6 985.7L956.2 989.4ZM956.9 991.7L970.4 987.9L975.9 997.4L962.5 1001.2ZM963.9 1002.6L977.4 998.8L982.9 1008.3L969.5 1012.1ZM959.3 964.3L972.7 960.6L978.2 970.0L964.8 973.8ZM965.5 975.3L978.9 971.5L984.5 981.0L971.1 984.8ZM973.3 986.2L986.8 982.4L992.3 991.9L978.9 995.7ZM975.7 959.6L989.1 955.9L994.6 965.4L981.2 969.1ZM982.7 970.6L996.1 966.8L1001.7 976.3L988.2 980.1ZM993.6 955.7L1007.1 952.0L1012.6 961.4L999.2 965.2ZM971.8 1076.8L985.2 1073.1L990.7 1082.5L977.3 1086.3ZM986.6 1072.9L1000.0 1069.1L1005.6 1078.6L992.1 1082.4ZM1003.0 1069.0L1016.4 1065.2L1022.0 1074.7L1008.6 1078.5ZM1018.6 1065.1L1032.1 1061.3L1037.6 1070.8L1024.2 1074.6ZM1035.0 1061.2L1048.5 1057.4L1054.0 1066.9L1040.6 1070.7ZM1051.4 1056.5L1064.9 1052.7L1070.4 1062.2L1057.0 1066.0ZM1067.9 1051.8L1081.3 1048.1L1086.8 1057.5L1073.4 1061.3ZM1058.5 1067.5L1071.9 1063.7L1077.5 1073.2L1064.0 1076.9ZM1074.9 1062.8L1088.3 1059.0L1093.9 1068.5L1080.4 1072.3ZM1082.7 1074.5L1096.1 1070.7L1101.7 1080.2L1088.2 1084.0ZM1089.7 1057.3L1103.2 1053.5L1108.7 1063.0L1095.3 1066.8ZM1024.9 1075.3L1038.3 1071.5L1043.9 1081.0L1030.4 1084.8ZM1282.1 1001.8L1295.5 998.1L1301.1 1007.5L1287.6 1011.3ZM1298.5 997.1L1311.9 993.4L1317.5 1002.9L1304.0 1006.6ZM1314.9 992.5L1328.3 988.7L1333.9 998.2L1320.4 1001.9ZM1330.5 987.8L1343.9 984.0L1349.5 993.5L1336.1 997.3ZM1289.1 1013.6L1302.5 1009.8L1308.1 1019.3L1294.6 1023.0ZM1296.1 1024.5L1309.6 1020.7L1315.1 1030.2L1301.7 1034.0ZM1376.6 974.5L1390.0 970.7L1395.6 980.2L1382.1 984.0ZM1106.3 1053.4L1119.7 1049.6L1125.3 1059.1L1111.8 1062.9ZM1112.5 1065.1L1126.0 1061.3L1131.5 1070.8L1118.1 1074.6ZM1128.2 1060.4L1141.6 1056.6L1147.1 1066.1L1133.7 1069.9ZM1151.6 1066.7L1165.0 1062.9L1170.6 1072.4L1157.1 1076.2ZM1135.2 1073.7L1148.6 1069.9L1154.2 1079.4L1140.7 1083.2ZM1157.1 1076.8L1170.5 1073.1L1176.1 1082.5L1162.6 1086.3ZM1315.7 1058.1L1329.1 1054.3L1334.6 1063.8L1321.2 1067.6ZM1321.9 1070.6L1335.4 1066.8L1340.9 1076.3L1327.5 1080.1ZM1394.7 969.8L1408.2 966.0L1413.7 975.5L1400.3 979.3ZM1410.9 965.4L1424.3 961.6L1429.9 971.1L1416.4 974.9ZM1427.0 960.9L1440.5 957.2L1446.0 966.7L1432.6 970.4ZM1443.2 956.5L1456.6 952.7L1462.1 962.2L1448.7 966.0ZM1536.1 956.5L1549.6 952.7L1555.1 962.2L1541.7 966.0ZM1555.7 987.8L1569.1 984.0L1574.6 993.5L1561.2 997.3ZM1562.7 999.5L1576.1 995.7L1581.7 1005.2L1568.2 1009.0ZM1569.7 1011.2L1583.2 1007.4L1588.7 1016.9L1575.3 1020.7ZM1588.5 1044.8L1601.9 1041.0L1607.5 1050.5L1594.0 1054.3ZM1595.5 1056.5L1608.9 1052.7L1614.5 1062.2L1601.1 1066.0ZM1602.5 1067.5L1616.0 1063.7L1621.5 1073.2L1608.1 1076.9ZM1586.1 1072.1L1599.6 1068.4L1605.1 1077.9L1591.7 1081.6ZM1569.7 1076.8L1583.2 1073.1L1588.7 1082.5L1575.3 1086.3ZM1554.9 1079.2L1568.3 1075.4L1573.9 1084.9L1560.4 1088.7ZM1767.2 900.5L1780.6 896.7L1786.2 906.2L1772.7 910.0ZM1788.8 906.3L1802.3 902.5L1807.8 912.0L1794.4 915.8ZM1755.5 915.5L1768.9 911.7L1774.5 921.2L1761.1 925.0ZM1779.7 922.1L1793.1 918.4L1798.7 927.9L1785.2 931.6ZM1796.3 918.0L1809.8 914.2L1815.3 923.7L1801.9 927.5ZM1812.2 913.8L1825.6 910.0L1831.2 919.5L1817.7 923.3ZM1821.3 902.1L1834.8 898.4L1840.3 907.9L1826.9 911.6ZM1828.8 908.8L1842.3 905.0L1847.8 914.5L1834.4 918.3ZM1844.7 904.6L1858.1 900.9L1863.7 910.4L1850.2 914.1ZM1860.5 900.5L1873.9 896.7L1879.5 906.2L1866.1 910.0ZM1763.8 927.1L1777.3 923.4L1782.8 932.9L1769.4 936.6ZM1752.2 932.1L1765.6 928.4L1771.2 937.9L1757.7 941.6ZM1893.8 1022.1L1907.3 1018.4L1912.8 1027.9L1899.4 1031.6ZM1908.8 1017.1L1922.3 1013.4L1927.8 1022.9L1914.4 1026.6ZM1884.7 1038.0L1898.1 1034.2L1903.7 1043.7L1890.2 1047.5ZM1907.2 1043.8L1920.6 1040.0L1926.2 1049.5L1912.7 1053.3ZM1891.3 1048.8L1904.8 1045.0L1910.3 1054.5L1896.9 1058.3ZM1874.7 1053.0L1888.1 1049.2L1893.7 1058.7L1880.2 1062.5ZM1882.2 1065.5L1895.6 1061.7L1901.2 1071.2L1887.7 1075.0ZM1870.1 180.1L1883.6 176.3L1889.1 185.8L1875.7 189.6ZM1885.9 175.5L1899.3 171.7L1904.9 181.2L1891.4 185.0ZM1901.6 170.8L1915.1 167.1L1920.6 176.6L1907.2 180.3ZM1908.1 182.9L1921.5 179.1L1927.1 188.6L1913.6 192.4ZM1860.0 196.8L1873.4 193.0L1878.9 202.5L1865.5 206.3ZM1876.6 191.2L1890.1 187.4L1895.6 196.9L1882.2 200.7ZM1899.8 198.6L1913.2 194.8L1918.8 204.3L1905.3 208.1ZM1851.6 212.5L1865.1 208.7L1870.6 218.2L1857.2 222.0ZM1867.4 207.9L1880.8 204.1L1886.3 213.6L1872.9 217.4ZM1890.5 214.4L1903.9 210.6L1909.5 220.1L1896.1 223.9ZM1908.1 221.8L1921.5 218.0L1927.1 227.5L1913.6 231.3ZM1857.2 224.6L1870.6 220.8L1876.2 230.3L1862.7 234.0ZM1880.3 230.1L1893.8 226.3L1899.3 235.8L1885.9 239.6ZM1903.5 236.6L1916.9 232.8L1922.5 242.3L1909.0 246.1ZM1864.6 235.7L1878.0 231.9L1883.6 241.4L1870.1 245.2ZM1886.8 241.2L1900.2 237.4L1905.8 246.9L1892.3 250.7ZM1872.0 247.7L1885.4 243.9L1891.0 253.4L1877.5 257.2ZM1894.2 253.3L1907.7 249.5L1913.2 259.0L1899.8 262.7ZM1900.7 264.4L1914.1 260.6L1919.7 270.1L1906.2 273.9ZM1909.0 259.7L1922.5 256.0L1928.0 265.4L1914.6 269.2ZM1753.5 360.8L1766.9 357.1L1772.5 366.6L1759.0 370.3ZM1773.8 367.3L1787.3 363.5L1792.8 373.0L1779.4 376.8ZM1796.1 374.7L1809.5 371.0L1815.0 380.4L1801.6 384.2ZM1819.2 381.2L1832.7 377.4L1838.2 386.9L1824.8 390.7ZM1841.4 387.7L1854.9 383.9L1860.4 393.4L1847.0 397.2ZM1864.6 394.2L1878.0 390.4L1883.6 399.9L1870.1 403.7ZM1886.8 400.7L1900.2 396.9L1905.8 406.4L1892.3 410.2ZM1907.2 408.1L1920.6 404.3L1926.2 413.8L1912.7 417.6ZM1748.8 377.5L1762.3 373.7L1767.8 383.2L1754.4 387.0ZM1768.3 422.9L1781.7 419.1L1787.3 428.6L1773.8 432.4ZM1806.2 424.7L1819.7 421.0L1825.2 430.4L1811.8 434.2ZM1758.1 438.6L1771.5 434.8L1777.1 444.3L1763.6 448.1ZM1797.0 440.5L1810.4 436.7L1816.0 446.2L1802.5 450.0ZM1835.9 442.3L1849.3 438.5L1854.9 448.0L1841.4 451.8ZM1874.8 444.2L1888.2 440.4L1893.8 449.9L1880.3 453.7ZM1751.6 454.4L1765.1 450.6L1770.6 460.1L1757.2 463.9ZM1826.6 458.1L1840.1 454.3L1845.6 463.8L1832.2 467.6ZM1865.5 459.9L1878.9 456.1L1884.5 465.6L1871.1 469.4ZM1778.5 472.0L1791.9 468.2L1797.5 477.7L1784.0 481.5ZM1855.3 475.7L1868.8 471.9L1874.3 481.4L1860.9 485.2ZM1769.2 487.7L1782.7 483.9L1788.2 493.4L1774.8 497.2ZM1808.1 490.5L1821.5 486.7L1827.1 496.2L1813.6 500.0ZM1847.0 492.3L1860.4 488.5L1866.0 498.0L1852.5 501.8ZM1797.9 505.3L1811.4 501.5L1816.9 511.0L1803.5 514.8ZM1836.8 506.2L1850.2 502.4L1855.8 511.9L1842.3 515.7ZM1891.4 505.3L1904.9 501.5L1910.4 511.0L1897.0 514.8ZM1907.2 501.6L1920.6 497.8L1926.2 507.3L1912.7 511.1ZM1752.5 520.3L1766.0 516.5L1771.5 526.0L1758.1 529.8ZM1788.7 522.1L1802.1 518.4L1807.6 527.9L1794.2 531.6ZM1882.2 522.1L1895.6 518.4L1901.2 527.9L1887.7 531.6ZM1818.3 539.7L1831.7 536.0L1837.3 545.4L1823.8 549.2ZM1872.9 537.9L1886.4 534.1L1891.9 543.6L1878.5 547.4ZM1770.1 554.6L1783.6 550.8L1789.1 560.3L1775.7 564.0ZM1809.0 556.4L1822.5 552.6L1828.0 562.1L1814.6 565.9ZM1863.7 553.6L1877.1 549.8L1882.6 559.3L1869.2 563.1ZM1907.2 539.7L1920.6 536.0L1926.2 545.4L1912.7 549.2ZM1760.0 570.3L1773.4 566.5L1778.9 576.0L1765.5 579.8ZM1799.8 572.1L1813.2 568.4L1818.8 577.9L1805.3 581.6ZM1870.1 564.7L1883.6 561.0L1889.1 570.4L1875.7 574.2ZM1885.9 560.1L1899.3 556.3L1904.9 565.8L1891.4 569.6ZM1901.6 555.5L1915.1 551.7L1920.6 561.2L1907.2 565.0ZM1907.2 566.6L1920.6 562.8L1926.2 572.3L1912.7 576.1ZM1752.5 586.0L1766.0 582.3L1771.5 591.7L1758.1 595.5ZM1789.6 587.9L1803.0 584.1L1808.6 593.6L1795.1 597.4ZM1829.4 589.7L1842.8 586.0L1848.4 595.4L1834.9 599.2ZM1845.1 586.0L1858.6 582.3L1864.1 591.7L1850.7 595.5ZM1860.9 580.5L1874.3 576.7L1879.9 586.2L1866.4 590.0ZM1867.4 592.5L1880.8 588.7L1886.3 598.2L1872.9 602.0ZM1889.6 599.0L1903.0 595.2L1908.6 604.7L1895.1 608.5ZM1908.1 606.4L1921.5 602.6L1927.1 612.1L1913.6 615.9ZM1780.3 603.6L1793.8 599.8L1799.3 609.3L1785.9 613.1ZM1819.2 606.4L1832.7 602.6L1838.2 612.1L1824.8 615.9ZM1810.0 622.1L1823.4 618.4L1828.9 627.9L1815.5 631.6ZM1750.7 639.7L1764.1 636.0L1769.7 645.4L1756.2 649.2ZM1768.3 647.1L1781.7 643.4L1787.3 652.9L1773.8 656.6ZM1790.5 654.6L1803.9 650.8L1809.5 660.3L1796.1 664.0ZM1813.7 661.0L1827.1 657.3L1832.6 666.7L1819.2 670.5ZM1835.9 667.5L1849.3 663.7L1854.9 673.2L1841.4 677.0ZM1859.0 674.0L1872.5 670.2L1878.0 679.7L1864.6 683.5ZM1882.2 680.5L1895.6 676.7L1901.2 686.2L1887.7 690.0ZM1903.5 687.0L1916.9 683.2L1922.5 692.7L1909.0 696.5ZM1748.8 536.0L1762.3 532.3L1767.8 541.7L1754.4 545.5ZM1748.8 602.7L1762.3 598.9L1767.8 608.4L1754.4 612.2ZM1751.7 761.5L1765.1 757.7L1770.7 767.2L1757.2 770.9ZM1752.7 772.7L1766.2 768.9L1771.7 778.4L1758.3 782.1ZM1755.8 783.9L1769.2 780.1L1774.8 789.6L1761.3 793.3ZM1760.9 795.0L1774.3 791.3L1779.9 800.8L1766.4 804.5ZM1768.0 807.3L1781.4 803.5L1787.0 813.0L1773.5 816.8ZM1776.1 818.5L1789.6 814.7L1795.1 824.2L1781.7 828.0ZM1749.7 795.0L1763.1 791.3L1768.7 800.8L1755.2 804.5ZM1752.7 809.3L1766.2 805.5L1771.7 815.0L1758.3 818.8ZM1756.8 822.5L1770.2 818.8L1775.8 828.2L1762.3 832.0ZM1749.7 829.7L1763.1 825.9L1768.7 835.4L1755.2 839.2ZM1791.4 813.4L1804.8 809.6L1810.4 819.1L1797.0 822.9ZM1806.7 808.3L1820.1 804.5L1825.7 814.0L1812.2 817.8ZM1823.0 803.2L1836.4 799.4L1841.9 808.9L1828.5 812.7ZM1829.1 815.4L1842.5 811.6L1848.1 821.1L1834.6 824.9ZM1836.2 826.6L1849.6 822.8L1855.2 832.3L1841.7 836.1ZM1843.3 837.8L1856.8 834.0L1862.3 843.5L1848.9 847.3ZM1850.4 850.0L1863.9 846.2L1869.4 855.7L1856.0 859.5ZM1856.6 861.2L1870.0 857.4L1875.5 866.9L1862.1 870.7ZM1862.7 872.4L1876.1 868.6L1881.6 878.1L1868.2 881.9ZM1868.8 883.6L1882.2 879.8L1887.8 889.3L1874.3 893.1ZM1755.8 850.0L1769.2 846.2L1774.8 855.7L1761.3 859.5ZM1772.1 845.9L1785.5 842.2L1791.0 851.7L1777.6 855.4ZM1787.3 840.9L1800.8 837.1L1806.3 846.6L1792.9 850.3ZM1803.6 835.8L1817.1 832.0L1822.6 841.5L1809.2 845.3ZM1819.9 831.7L1833.3 827.9L1838.9 837.4L1825.5 841.2ZM1749.7 856.1L1763.1 852.3L1768.7 861.8L1755.2 865.6ZM1830.1 881.6L1843.5 877.8L1849.1 887.3L1835.6 891.1ZM1798.5 890.7L1812.0 887.0L1817.5 896.4L1804.1 900.2ZM1766.0 899.9L1779.4 896.1L1784.9 905.6L1771.5 909.4ZM1853.5 887.7L1866.9 883.9L1872.5 893.4L1859.0 897.2ZM1820.9 897.9L1834.4 894.1L1839.9 903.6L1826.5 907.4ZM1860.6 898.9L1874.1 895.1L1879.6 904.6L1866.2 908.4ZM1787.3 906.0L1800.8 902.2L1806.3 911.7L1792.9 915.5ZM1842.3 905.0L1855.7 901.2L1861.3 910.7L1847.8 914.5Z" fill="#8b8b8b" filter="url(#sqsh)"/>
<rect x="164" y="124" width="1592" height="831" rx="7" fill="#e8e8e8" filter="url(#wshadow)"/>
<g clip-path="url(#winclip)">
<rect x="164" y="124" width="1592" height="23" fill="url(#gTitle)"/>
<line x1="164" y1="147.5" x2="1756" y2="147.5" stroke="#b9b9b9" stroke-width="1" />
<circle cx="175" cy="136" r="5.3" fill="#fc5f57" stroke="#df4a44" stroke-width="0.6" />
<circle cx="191.7" cy="136" r="5.3" fill="#fdbc2e" stroke="#dda031" stroke-width="0.6" />
<circle cx="208" cy="136" r="5.3" fill="#28c840" stroke="#1fa532" stroke-width="0.6" />
<text x="993" y="140" font-size="10.4" fill="#262626" text-anchor="middle" font-weight="normal" font-family="Liberation Sans" font-style="normal" stroke="#262626" stroke-width="0.25" >Crescendo Masters by NCH Software - Licensed software</text>
<rect x="164" y="148" width="1592" height="20" fill="#d6d6d6"/>
<line x1="164" y1="168.5" x2="1756" y2="168.5" stroke="#b5b5b5" stroke-width="1" />
<rect x="306.5" y="149.5" width="66" height="19.5" fill="#ffffff" stroke="#c5c5c5" stroke-width="1"/>
<rect x="307" y="150" width="65" height="20" fill="#ffffff"/>
<text x="199.8" y="164" font-size="10.5" fill="#1e1e1e" text-anchor="middle" font-weight="normal" font-family="Liberation Sans" font-style="normal" stroke="#1e1e1e" stroke-width="0.25" >Score</text>
<text x="269" y="164" font-size="10.5" fill="#1e1e1e" text-anchor="middle" font-weight="normal" font-family="Liberation Sans" font-style="normal" stroke="#1e1e1e" stroke-width="0.25" >Edit</text>
<text x="339" y="164" font-size="10.5" fill="#1e1e1e" text-anchor="middle" font-weight="normal" font-family="Liberation Sans" font-style="normal" stroke="#1e1e1e" stroke-width="0.25" >Notation</text>
<text x="408.7" y="164" font-size="10.5" fill="#1e1e1e" text-anchor="middle" font-weight="normal" font-family="Liberation Sans" font-style="normal" stroke="#1e1e1e" stroke-width="0.25" >Drums</text>
<text x="478.5" y="164" font-size="10.5" fill="#1e1e1e" text-anchor="middle" font-weight="normal" font-family="Liberation Sans" font-style="normal" stroke="#1e1e1e" stroke-width="0.25" >Strings</text>
<text x="548" y="164" font-size="10.5" fill="#1e1e1e" text-anchor="middle" font-weight="normal" font-family="Liberation Sans" font-style="normal" stroke="#1e1e1e" stroke-width="0.25" >Help</text>
<text x="617.7" y="164" font-size="10.5" fill="#1e1e1e" text-anchor="middle" font-weight="normal" font-family="Liberation Sans" font-style="normal" stroke="#1e1e1e" stroke-width="0.25" >Suite</text>
<rect x="164" y="169" width="1592" height="48" fill="url(#gTool)"/>
<line x1="164" y1="217.5" x2="1756" y2="217.5" stroke="#a9a9a9" stroke-width="1" />
<rect x="164" y="218" width="1592" height="31" fill="#ffffff"/>
</g>
<rect x="591.5" y="170.5" width="50.5" height="45" fill="url(#gSel)" stroke="#7d8694" stroke-width="1" rx="2.5"/>
<rect x="691.5" y="170.5" width="54.5" height="45" fill="url(#gSel)" stroke="#7d8694" stroke-width="1" rx="2.5"/>
<line x1="327.8" y1="173" x2="327.8" y2="213" stroke="#c4c4c4" stroke-width="1" />
<line x1="521.5" y1="173" x2="521.5" y2="213" stroke="#c4c4c4" stroke-width="1" />
<line x1="750.3" y1="173" x2="750.3" y2="213" stroke="#c4c4c4" stroke-width="1" />
<line x1="1112.6" y1="173" x2="1112.6" y2="213" stroke="#c4c4c4" stroke-width="1" />
<line x1="1223.9" y1="173" x2="1223.9" y2="213" stroke="#c4c4c4" stroke-width="1" />
<path d="M181.3 176.7 L199.2 187.6 L193.3 191.3 L197.9 199.3 L191.6 201.4 L187 193.4 L181.3 197.6 Z" fill="url(#gArrow)" stroke="#8a8a8a" stroke-width="0.9"/>
<text x="189.5" y="210.6" font-size="9.3" fill="#1e1e1e" text-anchor="middle" font-weight="normal" font-family="Liberation Sans" font-style="normal" stroke="#1e1e1e" stroke-width="0.25" >Select</text>
<path d="M236.8 184.5 L236.8 178.6 Q236.8 176.6 238.6 176.6 Q240.4 176.6 240.4 178.6 L240.4 183.5 L240.6 177.2 Q240.6 175.6 242.5 175.6 Q244.4 175.6 244.4 177.2 L244.4 183.5 L244.6 177.8 Q244.6 176.2 246.4 176.2 Q248.2 176.2 248.2 177.8 L248.3 184 L248.6 179.6 Q248.7 178 250.5 178 Q252.4 178.1 252.4 179.8 L252.5 193 Q252.6 198.5 250.6 201.6 L238.8 201.6 Q236.5 197.5 233.5 192.8 L231.8 189.6 Q231.2 188 232.6 187.5 Q234.3 187 235.5 188.6 L236.8 190.5 Z" fill="url(#gHand)" stroke="#8a8a8a" stroke-width="0.8"/>
<text x="242.8" y="210.6" font-size="9.3" fill="#1e1e1e" text-anchor="middle" font-weight="normal" font-family="Liberation Sans" font-style="normal" stroke="#1e1e1e" stroke-width="0.25" >Pan</text>
<line x1="297" y1="190.2" x2="307.2" y2="200.2" stroke="#3f3f3f" stroke-width="3.2" stroke-linecap="round"/>
<circle cx="290.8" cy="183.8" r="6.2" fill="#eef6ee" stroke="#9a9a9a" stroke-width="2" />
<line x1="287" y1="183.8" x2="294.6" y2="183.8" stroke="#3c9a46" stroke-width="1.8" />
<line x1="290.8" y1="180" x2="290.8" y2="187.6" stroke="#3c9a46" stroke-width="1.8" />
<text x="296" y="210.6" font-size="9.3" fill="#1e1e1e" text-anchor="middle" font-weight="normal" font-family="Liberation Sans" font-style="normal" stroke="#1e1e1e" stroke-width="0.25" >Zoom</text>
<rect x="344.3" y="178.3" width="26.2" height="9.6" fill="#d8d8de" stroke="#9c9c9c" stroke-width="0.8" rx="1"/>
<line x1="345" y1="180.5" x2="370" y2="180.5" stroke="#f7f7f7" stroke-width="0.9" />
<line x1="345" y1="182.7" x2="370" y2="182.7" stroke="#f7f7f7" stroke-width="0.9" />
<line x1="345" y1="184.9" x2="370" y2="184.9" stroke="#f7f7f7" stroke-width="0.9" />
<rect x="344.3" y="190.3" width="26.2" height="10.2" fill="url(#gMeas)" stroke="#777" stroke-width="0.8" rx="1.2" stroke-dasharray="1.5 1"/>
<line x1="353.3" y1="195.3" x2="361.1" y2="195.3" stroke="#3aa240" stroke-width="2.2" />
<line x1="357.2" y1="191.5" x2="357.2" y2="199.1" stroke="#3aa240" stroke-width="2.2" />
<path d="M380.4 191.15L382.8 193.45L385.2 191.15" fill="none" stroke="#111" stroke-width="1.9" stroke-linecap="round" stroke-linejoin="round"/>
<text x="363.6" y="210.6" font-size="9.3" fill="#1e1e1e" text-anchor="middle" font-weight="normal" font-family="Liberation Sans" font-style="normal" stroke="#1e1e1e" stroke-width="0.25" >Measure</text>
<line x1="417.5" y1="176" x2="417.5" y2="202" stroke="#000" stroke-width="2.3" />
<path d="M442.3 191.15L444.7 193.45L447.1 191.15" fill="none" stroke="#111" stroke-width="1.9" stroke-linecap="round" stroke-linejoin="round"/>
<text x="418" y="210.6" font-size="9.3" fill="#1e1e1e" text-anchor="middle" font-weight="normal" font-family="Liberation Sans" font-style="normal" stroke="#1e1e1e" stroke-width="0.25" >Barline</text>
<circle cx="469.5" cy="185" r="1.7" fill="#000" />
<circle cx="469.5" cy="191.1" r="1.7" fill="#000" />
<circle cx="486.4" cy="185" r="1.7" fill="#000" />
<circle cx="486.4" cy="191.1" r="1.7" fill="#000" />
<line x1="473.5" y1="176.5" x2="473.5" y2="201.5" stroke="#000" stroke-width="1.8" />
<line x1="478.4" y1="176.5" x2="478.4" y2="201.5" stroke="#000" stroke-width="3.8" />
<line x1="482.8" y1="176.5" x2="482.8" y2="201.5" stroke="#000" stroke-width="1.8" />
<path d="M500.8 191.15L503.2 193.45L505.6 191.15" fill="none" stroke="#111" stroke-width="1.9" stroke-linecap="round" stroke-linejoin="round"/>
<text x="484" y="210.6" font-size="9.3" fill="#1e1e1e" text-anchor="middle" font-weight="normal" font-family="Liberation Sans" font-style="normal" stroke="#1e1e1e" stroke-width="0.25" >Repeat</text>
<line x1="549" y1="189" x2="549" y2="201" stroke="#9a9a9a" stroke-width="1" />
<ellipse cx="551.6" cy="189.2" rx="3.2" ry="2.2" fill="#000" transform="rotate(-25 551.6 189.2)" />
<line x1="554.6" y1="176" x2="554.6" y2="189.2" stroke="#000" stroke-width="1.1" />
<path d="M574.5 191.55L576.9 193.85L579.3 191.55" fill="none" stroke="#111" stroke-width="1.9" stroke-linecap="round" stroke-linejoin="round"/>
<text x="557.8" y="210.6" font-size="9.3" fill="#1e1e1e" text-anchor="middle" font-weight="normal" font-family="Liberation Sans" font-style="normal" stroke="#1e1e1e" stroke-width="0.25" >Voice</text>
<ellipse cx="607.2" cy="197.8" rx="5.3" ry="3.7" fill="#000" transform="rotate(-22 607.2 197.8)" />
<line x1="611.9" y1="178.3" x2="611.9" y2="197.5" stroke="#000" stroke-width="1.3" />
<path d="M611.9 178.6 C 612.85 183.35 620.45 186.2 618.07 194.75 C 619.02 188.1 612.85 186.2 611.9 183.35 Z" fill="#000"/>
<path d="M611.9 183.82 C 612.85 188.57 620.45 191.42 618.07 199.97 C 619.02 193.32 612.85 191.42 611.9 188.57 Z" fill="#000"/>
<path d="M632.6 191.55L635 193.85L637.4 191.55" fill="none" stroke="#111" stroke-width="1.9" stroke-linecap="round" stroke-linejoin="round"/>
<text x="610.8" y="210.6" font-size="9.3" fill="#1e1e1e" text-anchor="middle" font-weight="normal" font-family="Liberation Sans" font-style="normal" stroke="#1e1e1e" stroke-width="0.25" >Notes</text>
<rect x="650.6" y="186.8" width="18.8" height="6.3" fill="#000"/>
<line x1="647.5" y1="186.4" x2="672.8" y2="186.4" stroke="#000" stroke-width="2" />
<path d="M682.4 191.55L684.8 193.85L687.2 191.55" fill="none" stroke="#111" stroke-width="1.9" stroke-linecap="round" stroke-linejoin="round"/>
<text x="660.8" y="210.6" font-size="9.3" fill="#1e1e1e" text-anchor="middle" font-weight="normal" font-family="Liberation Sans" font-style="normal" stroke="#1e1e1e" stroke-width="0.25" >Rests</text>
<ellipse cx="706.4" cy="195" rx="4.2" ry="3" fill="#000" transform="rotate(-22 706.4 195)" />
<ellipse cx="719.4" cy="193" rx="4.2" ry="3" fill="#000" transform="rotate(-22 719.4 193)" />
<line x1="710" y1="178" x2="710" y2="194.5" stroke="#000" stroke-width="1.2" />
<line x1="722.9" y1="176.6" x2="722.9" y2="192.5" stroke="#000" stroke-width="1.2" />
<path d="M709.4 177.2 L723.5 175.8 L723.5 179 L709.4 180.4 Z" fill="#000"/>
<text x="713.8" y="203.2" font-size="7.2" fill="#1e1e1e" text-anchor="middle" font-weight="normal" font-family="Liberation Sans" font-style="normal" stroke="#1e1e1e" stroke-width="0.25" >Auto</text>
<text x="713" y="210.6" font-size="9.3" fill="#1e1e1e" text-anchor="middle" font-weight="normal" font-family="Liberation Sans" font-style="normal" stroke="#1e1e1e" stroke-width="0.25" >Beams</text>
<path d="M737 191.55L739.4 193.85L741.8 191.55" fill="none" stroke="#111" stroke-width="1.9" stroke-linecap="round" stroke-linejoin="round"/>
<text x="781.5" y="192.8" font-size="19" fill="#000" text-anchor="middle" font-weight="bold" font-family="Liberation Serif" font-style="italic" letter-spacing="-1.2">mp</text>
<path d="M812.7 191.35L815.1 193.65L817.5 191.35" fill="none" stroke="#111" stroke-width="1.9" stroke-linecap="round" stroke-linejoin="round"/>
<text x="782" y="210.6" font-size="9.3" fill="#1e1e1e" text-anchor="middle" font-weight="normal" font-family="Liberation Sans" font-style="normal" stroke="#1e1e1e" stroke-width="0.25" >Dynamics</text>
<text x="843.5" y="194" font-size="22.5" fill="#000" text-anchor="middle" font-weight="bold" font-family="Liberation Serif" font-style="italic" letter-spacing="-1.5">fp</text>
<path d="M869 191.35L871.4 193.65L873.8 191.35" fill="none" stroke="#111" stroke-width="1.9" stroke-linecap="round" stroke-linejoin="round"/>
<text x="843.8" y="210.6" font-size="9.3" fill="#1e1e1e" text-anchor="middle" font-weight="normal" font-family="Liberation Sans" font-style="normal" stroke="#1e1e1e" stroke-width="0.25" >Accent</text>
<text x="898.6" y="193.6" font-size="13.8" fill="#1e1e1e" text-anchor="middle" font-weight="normal" font-family="Liberation Serif" font-style="normal" >8</text>
<text x="907.8" y="189.6" font-size="9.5" fill="#1e1e1e" text-anchor="middle" font-weight="normal" font-family="Liberation Serif" font-style="italic" >va</text>
<line x1="913.5" y1="184.9" x2="919.6" y2="184.9" stroke="#333" stroke-width="1.3" stroke-dasharray="1.4 1.1"/>
<line x1="920.7" y1="184.3" x2="920.7" y2="193.6" stroke="#222" stroke-width="1.4" />
<path d="M944 191.35L946.4 193.65L948.8 191.35" fill="none" stroke="#111" stroke-width="1.9" stroke-linecap="round" stroke-linejoin="round"/>
<text x="909.6" y="210.6" font-size="9.3" fill="#1e1e1e" text-anchor="middle" font-weight="normal" font-family="Liberation Sans" font-style="normal" stroke="#1e1e1e" stroke-width="0.25" >Octave Line</text>
<path d="M968.6 186.6 L969.5 191 L993.1 191 L994 186.6" fill="none" stroke="#111" stroke-width="1.9"/>
<path d="M1012.7 191.15L1015.1 193.45L1017.5 191.15" fill="none" stroke="#111" stroke-width="1.9" stroke-linecap="round" stroke-linejoin="round"/>
<text x="981.9" y="210.6" font-size="9.3" fill="#1e1e1e" text-anchor="middle" font-weight="normal" font-family="Liberation Sans" font-style="normal" stroke="#1e1e1e" stroke-width="0.25" >Pedal Line</text>
<g transform="translate(1045.8 177) scale(0.89)" fill="none" stroke="#8d8d8d" stroke-linecap="round" stroke-linejoin="round">
<path d="M5.0 18.6 C3.0 18.1 2.9 15.1 5.2 14.3 C8.5 13.5 10.2 17.4 8.3 20.0 C6.6 22.4 1.0 22.1 0.7 17.5 C0.4 13.2 5.6 10.6 7.0 7.1" stroke-width="1.91"/>
<path d="M7.0 7.1 C8.5 3.6 7.3 0.6 6.3 1.0 C4.9 1.9 4.4 5.0 4.9 9.0 L6.2 23.8" stroke-width="1.23"/>
<path d="M6.2 23.8 C6.3 26.4 2.6 26.4 2.7 24.2" stroke-width="1.23"/>
</g>
<circle cx="1048.74" cy="198.42" r="1.43" fill="#8d8d8d" />
<line x1="1058.5" y1="177.82" x2="1058.5" y2="189.34" stroke="#8d8d8d" stroke-width="0.58" />
<line x1="1060.3" y1="177.28" x2="1060.3" y2="188.98" stroke="#8d8d8d" stroke-width="0.58" />
<path d="M1057.24 181.2 L1061.56 180.12 L1061.56 181.42 L1057.24 182.5 Z" fill="#8d8d8d"/>
<path d="M1057.24 185.38 L1061.56 184.3 L1061.56 185.6 L1057.24 186.68 Z" fill="#8d8d8d"/>
<line x1="1065.3" y1="177.6" x2="1065.3" y2="190.6" stroke="#8d8d8d" stroke-width="1.1" />
<path d="M1065.3 190.6 C 1071.3 186.6 1071.3 183.6 1065.3 185.6 C 1069.3 185.1 1068.8 187.6 1065.3 189.1 Z" fill="#8d8d8d"/>
<path d="M1057.3 200.3 Q1063.7 190.8 1070.1 200.3" fill="none" stroke="#8d8d8d" stroke-width="1.4"/>
<circle cx="1063.7" cy="198.6" r="1.3" fill="#8d8d8d" />
<path d="M1081.1 191.15L1083.5 193.45L1085.9 191.15" fill="none" stroke="#8d8d8d" stroke-width="1.9" stroke-linecap="round" stroke-linejoin="round"/>
<text x="1064.4" y="210.6" font-size="9.3" fill="#8c8c8c" text-anchor="middle" font-weight="normal" font-family="Liberation Sans" font-style="normal" stroke="#8c8c8c" stroke-width="0.25" >More Symbols</text>
<text x="1141" y="201.8" font-size="36.5" fill="#000" text-anchor="middle" font-weight="normal" font-family="Liberation Serif" font-style="normal" >T</text>
<line x1="1144" y1="196" x2="1156" y2="196" stroke="#43b043" stroke-width="4" />
<line x1="1150" y1="190" x2="1150" y2="202" stroke="#43b043" stroke-width="4" />
<text x="1142.3" y="210.6" font-size="9.3" fill="#1e1e1e" text-anchor="middle" font-weight="normal" font-family="Liberation Sans" font-style="normal" stroke="#1e1e1e" stroke-width="0.25" >Text</text>
<line x1="1177.6" y1="178.6" x2="1198.3" y2="178.6" stroke="#111" stroke-width="2" />
<line x1="1178.4" y1="178.2" x2="1178.4" y2="188.5" stroke="#111" stroke-width="1" />
<line x1="1198" y1="178.2" x2="1198" y2="188.5" stroke="#111" stroke-width="1" />
<ellipse cx="1177" cy="188.8" rx="2.3" ry="1.7" fill="#111" transform="rotate(-20 1177 188.8)" />
<ellipse cx="1196.4" cy="188.8" rx="2.3" ry="1.7" fill="#111" transform="rotate(-20 1196.4 188.8)" />
<text x="1187.5" y="193" font-size="14" fill="#a9a9a9" text-anchor="middle" font-weight="normal" font-family="Liberation Serif" font-style="italic" >L</text>
<text x="1179.9" y="200.8" font-size="10" fill="#222" text-anchor="middle" font-weight="normal" font-family="Liberation Sans" font-style="normal" stroke="#222" stroke-width="0.25" >A</text>
<text x="1195.6" y="200.8" font-size="10" fill="#222" text-anchor="middle" font-weight="normal" font-family="Liberation Sans" font-style="normal" stroke="#222" stroke-width="0.25" >B</text>
<path d="M1210.5 191.15L1212.9 193.45L1215.3 191.15" fill="none" stroke="#111" stroke-width="1.9" stroke-linecap="round" stroke-linejoin="round"/>
<text x="1188.3" y="210.6" font-size="9.3" fill="#1e1e1e" text-anchor="middle" font-weight="normal" font-family="Liberation Sans" font-style="normal" stroke="#1e1e1e" stroke-width="0.25" >Lyrics</text>
<path d="M1254 181 Q1264 175 1274.6 183" fill="none" stroke="#111" stroke-width="1.5"/>
<ellipse cx="1252" cy="195.6" rx="2.9" ry="2.1" fill="#000" transform="rotate(-20 1252 195.6)" />
<ellipse cx="1262.9" cy="198.2" rx="2.9" ry="2.1" fill="#000" transform="rotate(-20 1262.9 198.2)" />
<ellipse cx="1271.8" cy="198.2" rx="2.9" ry="2.1" fill="#000" transform="rotate(-20 1271.8 198.2)" />
<line x1="1254.6" y1="183.4" x2="1254.6" y2="195.4" stroke="#000" stroke-width="1" />
<line x1="1265.4" y1="186.6" x2="1265.4" y2="198" stroke="#000" stroke-width="1" />
<line x1="1274.4" y1="183.4" x2="1274.4" y2="198" stroke="#000" stroke-width="1" />
<path d="M1254.3 183.2 L1265.8 185.6 L1265.8 188.2 L1254.3 185.8 Z" fill="#111"/>
<path d="M1301.1 191.35L1303.5 193.65L1305.9 191.35" fill="none" stroke="#111" stroke-width="1.9" stroke-linecap="round" stroke-linejoin="round"/>
<text x="1262.5" y="210.6" font-size="9.3" fill="#1e1e1e" text-anchor="middle" font-weight="normal" font-family="Liberation Sans" font-style="normal" stroke="#1e1e1e" stroke-width="0.25" >Relationships</text>
<rect x="1325.1" y="177.7" width="13.5" height="7.2" fill="#fff" stroke="#555" stroke-width="0.8"/>
<text x="1330" y="183.9" font-size="6.5" fill="#111" text-anchor="middle" font-weight="bold" font-family="Liberation Serif" font-style="normal" >x.</text>
<rect x="1314.2" y="186.3" width="26.8" height="13.4" fill="#fff" stroke="#444" stroke-width="0.9"/>
<line x1="1314.2" y1="189.6" x2="1341" y2="189.6" stroke="#666" stroke-width="0.7" />
<line x1="1314.2" y1="193" x2="1341" y2="193" stroke="#666" stroke-width="0.7" />
<line x1="1314.2" y1="196.4" x2="1341" y2="196.4" stroke="#666" stroke-width="0.7" />
<line x1="1325.6" y1="186.3" x2="1325.6" y2="199.7" stroke="#444" stroke-width="0.9" />
<line x1="1339" y1="186.3" x2="1339" y2="199.7" stroke="#444" stroke-width="0.9" />
<path d="M1349.7 191.35L1352.1 193.65L1354.5 191.35" fill="none" stroke="#111" stroke-width="1.9" stroke-linecap="round" stroke-linejoin="round"/>
<text x="1328.2" y="210.6" font-size="9.3" fill="#1e1e1e" text-anchor="middle" font-weight="normal" font-family="Liberation Sans" font-style="normal" stroke="#1e1e1e" stroke-width="0.25" >Volta</text>
<g transform="translate(1383.4 176) scale(1)" fill="none" stroke="#111" stroke-linecap="round" stroke-linejoin="round">
<path d="M5.0 18.6 C3.0 18.1 2.9 15.1 5.2 14.3 C8.5 13.5 10.2 17.4 8.3 20.0 C6.6 22.4 1.0 22.1 0.7 17.5 C0.4 13.2 5.6 10.6 7.0 7.1" stroke-width="1.78"/>
<path d="M7.0 7.1 C8.5 3.6 7.3 0.6 6.3 1.0 C4.9 1.9 4.4 5.0 4.9 9.0 L6.2 23.8" stroke-width="1.16"/>
<path d="M6.2 23.8 C6.3 26.4 2.6 26.4 2.7 24.2" stroke-width="1.16"/>
</g>
<circle cx="1386.7" cy="200" r="1.6" fill="#111" />
<path d="M1410.1 191.35L1412.5 193.65L1414.9 191.35" fill="none" stroke="#111" stroke-width="1.9" stroke-linecap="round" stroke-linejoin="round"/>
<text x="1393.8" y="210.6" font-size="9.3" fill="#1e1e1e" text-anchor="middle" font-weight="normal" font-family="Liberation Sans" font-style="normal" stroke="#1e1e1e" stroke-width="0.25" >Signatures</text>
<path d="M1452.5 181.5 L1452.5 177.5 Q1452.5 176.3 1453.7 176.3 L1460.7 176.3 Q1461.9 176.3 1461.9 177.5 L1461.9 181.5" fill="none" stroke="#444" stroke-width="1.5"/>
<rect x="1444.3" y="181" width="24.5" height="16.8" fill="url(#gBrief)" rx="2"/>
<line x1="1444.3" y1="186" x2="1468.8" y2="186" stroke="#7a7a7a" stroke-width="0.6" />
<path d="M1459.5 194.2 L1465.5 194.2 L1465.5 191.8 L1470.9 196.3 L1465.5 200.6 L1465.5 198.3 L1459.5 198.3 Z" fill="#7fd25a" stroke="#5aa83a" stroke-width="0.6"/>
<text x="1457.5" y="210.6" font-size="9.3" fill="#1e1e1e" text-anchor="middle" font-weight="normal" font-family="Liberation Sans" font-style="normal" stroke="#1e1e1e" stroke-width="0.25" >NCH Suite</text>
<rect x="1666.8" y="158.4" width="3" height="6.4" fill="#5a6f96"/>
<path d="M1670.2 158.5 L1673.5 154.5 L1674.3 151.8 Q1676.5 151.8 1675.8 155.5 L1679.5 155.6 Q1681 156.5 1680 158 Q1681 159.5 1679.8 160.5 Q1680.5 162.5 1678.8 163 Q1679.5 164.8 1677.5 164.9 L1670.2 164.9 Z" fill="#fafafa" stroke="#8a8a8a" stroke-width="0.6"/>
<rect x="1683.4" y="151.8" width="13.3" height="13.3" fill="#3b5a9a" rx="1.2"/>
<text x="1691.5" y="165.6" font-size="14" fill="#fff" text-anchor="middle" font-weight="bold" font-family="Liberation Sans" font-style="normal" >f</text>
<rect x="1700" y="151.8" width="13.3" height="13.3" fill="#2f9ad6" rx="1.2"/>
<path d="M1702.6 161.6 Q1706 162.6 1708.5 160 Q1710.6 157.6 1710.4 155.2 L1711.6 154.2 L1710.2 154.4 L1711.2 153.3 L1709.6 153.8 Q1708 152.4 1706.4 154.2 Q1705.8 155.2 1706 156.2 Q1703.8 156 1702.4 154.4 Q1701.8 156.2 1703.3 157.2 L1702.4 157 Q1702.6 158.8 1704.2 159.2 L1703.2 159.3 Q1703.8 160.6 1705.4 160.8 Q1704.2 161.8 1702.6 161.6 Z" fill="#fff"/>
<rect x="1716.7" y="151.8" width="13.3" height="13.3" fill="#2c6fa7" rx="1.2"/>
<text x="1723.3" y="162.9" font-size="9.5" fill="#fff" text-anchor="middle" font-weight="bold" font-family="Liberation Sans" font-style="normal" stroke="#fff" stroke-width="0.25" >in</text>
<circle cx="1746.5" cy="158.5" r="5.9" fill="#1f4f8f" stroke="#e8eef6" stroke-width="0.8" />
<text x="1746.5" y="162.2" font-size="9.5" fill="#fff" text-anchor="middle" font-weight="bold" font-family="Liberation Sans" font-style="normal" stroke="#fff" stroke-width="0.25" >?</text>
<rect x="231.5" y="130" width="9.5" height="12" fill="#f4f4f0" stroke="#9a9a9a" stroke-width="0.7"/>
<path d="M236.5 137.5 L242.5 141" fill="none" stroke="#e0a030" stroke-width="1.2"/>
<path d="M250.5 132 L262 131.3 L262.5 141 L251 142 Z" fill="#e9e07a" stroke="#a39a3a" stroke-width="0.6"/>
<circle cx="254" cy="134.8" r="3" fill="#4a9a3a" />
<rect x="268.2" y="129.8" width="12.8" height="13" fill="#1f4f93" rx="1"/>
<rect x="270.2" y="130.8" width="8.8" height="5" fill="#f0f0f0"/>
<rect x="271.5" y="138.8" width="6" height="4" fill="#dde6f2"/>
<path d="M293.5 135.6 L288.2 135.6 L291.4 131.8 M288.6 135.6 Q296 134.6 297.8 141" fill="none" stroke="#4a7dc4" stroke-width="2.2" stroke-linecap="round" stroke-linejoin="round"/>
<path d="M314.4 135.6 L319.7 135.6 L316.5 131.8 M319.3 135.6 Q311.9 134.6 310.1 141" fill="none" stroke="#b9b9b9" stroke-width="2.2" stroke-linecap="round" stroke-linejoin="round"/>
<line x1="164" y1="245.5" x2="1756" y2="245.5" stroke="#cfcfcf" stroke-width="1" />
<path d="M178.5 245.5 L178.5 222.5 L362.5 222.5 L362.5 245.5" fill="#ffffff" stroke="#d2d2d2" stroke-width="1"/>
<text x="185.7" y="238.9" font-size="11.25" fill="#1a1a1a" text-anchor="start" font-weight="normal" font-family="Liberation Sans" font-style="normal" stroke="#1a1a1a" stroke-width="0.25" >Dance of the Sugar Plum Fairy</text>
<line x1="344.4" y1="230" x2="352.6" y2="238.2" stroke="#8d8d8d" stroke-width="1.1" />
<line x1="344.4" y1="238.2" x2="352.6" y2="230" stroke="#8d8d8d" stroke-width="1.1" />
<path d="M362.5 245.5 L362.5 222.5 L564 222.5" fill="none" stroke="#d2d2d2" stroke-width="1"/>
<text x="370.2" y="238.9" font-size="11.2" fill="#1a1a1a" text-anchor="start" font-weight="normal" font-family="Liberation Sans" font-style="normal" stroke="#1a1a1a" stroke-width="0.25" >Greensleeves (What Child is This)</text>
<line x1="544.7" y1="230" x2="552.9" y2="238.2" stroke="#8d8d8d" stroke-width="1.1" />
<line x1="544.7" y1="238.2" x2="552.9" y2="230" stroke="#8d8d8d" stroke-width="1.1" />
<rect x="564" y="219.7" width="75.2" height="25.8" fill="#2f7b32"/>
<text x="570.6" y="236.8" font-size="11.1" fill="#e6f2e4" text-anchor="start" font-weight="normal" font-family="Liberation Sans" font-style="normal" stroke="#e6f2e4" stroke-width="0.25" >Grooving</text>
<line x1="620.1" y1="228.6" x2="628.5" y2="237" stroke="#7fbf7c" stroke-width="1.2" />
<line x1="620.1" y1="237" x2="628.5" y2="228.6" stroke="#7fbf7c" stroke-width="1.2" />
<rect x="164" y="249" width="90.5" height="648" fill="#e8e8e8"/>
<rect x="254.5" y="249" width="23.5" height="580" fill="#ebebeb"/>
<path d="M254.5 249 L254.5 284.4 L277.5 294.2 L277.5 414.4 L254.4 424.4" fill="none" stroke="#707070" stroke-width="1"/>
<line x1="254.4" y1="424.4" x2="254.4" y2="897" stroke="#9a9a9a" stroke-width="1" />
<rect x="254.5" y="249" width="23" height="35" fill="#e3e3e3"/>
<line x1="254.5" y1="249" x2="254.5" y2="284.4" stroke="#707070" stroke-width="1" />
<path d="M254.5 284.4 L277.5 294.2" fill="none" stroke="#707070" stroke-width="1"/>
<path d="M269 296 L264 300.6 L269 305.2" fill="none" stroke="#a0a0a0" stroke-width="0.9"/>
<path d="M269 405.3 L264 410 L269 414.7" fill="none" stroke="#a0a0a0" stroke-width="0.9"/>
<text x="0" y="0" font-size="10.1" fill="#1e1e1e" stroke="#1e1e1e" stroke-width="0.25" font-family="Liberation Sans" text-anchor="middle" transform="translate(259.5 357.5) rotate(90)">Hide Note Tools</text>
<rect x="165.8" y="259.8" width="37.3" height="36.8" fill="#d9d9d9" rx="4.5"/>
<rect x="165.8" y="259" width="37.3" height="36.8" fill="#fdfdfd" rx="4.5"/>
<rect x="207" y="259.8" width="37.3" height="36.8" fill="#d9d9d9" rx="4.5"/>
<rect x="207" y="259" width="37.3" height="36.8" fill="#fdfdfd" rx="4.5"/>
<rect x="165.8" y="302.8" width="37.3" height="36.8" fill="#d9d9d9" rx="4.5"/>
<rect x="165.8" y="302" width="37.3" height="36.8" fill="#fdfdfd" rx="4.5"/>
<rect x="207" y="302.8" width="37.3" height="36.8" fill="#d9d9d9" rx="4.5"/>
<rect x="207" y="302" width="37.3" height="36.8" fill="#fdfdfd" rx="4.5"/>
<rect x="165.8" y="349.8" width="37.3" height="36.8" fill="#d9d9d9" rx="4.5"/>
<rect x="165.8" y="349" width="37.3" height="36.8" fill="#fdfdfd" rx="4.5"/>
<rect x="207" y="349.8" width="37.3" height="36.8" fill="#d9d9d9" rx="4.5"/>
<rect x="207" y="349" width="37.3" height="36.8" fill="#fdfdfd" rx="4.5"/>
<rect x="165.8" y="393.3" width="37.3" height="36.8" fill="#d9d9d9" rx="4.5"/>
<rect x="165.8" y="392.5" width="37.3" height="36.8" fill="#fdfdfd" rx="4.5"/>
<rect x="207" y="393.3" width="37.3" height="36.8" fill="#d9d9d9" rx="4.5"/>
<rect x="207" y="392.5" width="37.3" height="36.8" fill="#fdfdfd" rx="4.5"/>
<rect x="165.8" y="436.3" width="37.3" height="36.8" fill="#d9d9d9" rx="4.5"/>
<rect x="165.8" y="435.5" width="37.3" height="36.8" fill="#fdfdfd" rx="4.5"/>
<rect x="207" y="436.3" width="37.3" height="36.8" fill="#d9d9d9" rx="4.5"/>
<rect x="207" y="435.5" width="37.3" height="36.8" fill="#fdfdfd" rx="4.5"/>
<rect x="165.8" y="479.5" width="37.3" height="36.8" fill="#d9d9d9" rx="4.5"/>
<rect x="165.8" y="478.7" width="37.3" height="36.8" fill="#fdfdfd" rx="4.5"/>
<rect x="207" y="479.5" width="37.3" height="36.8" fill="#d9d9d9" rx="4.5"/>
<rect x="207" y="478.7" width="37.3" height="36.8" fill="#fdfdfd" rx="4.5"/>
<rect x="165.8" y="522.8" width="37.3" height="36.8" fill="#d9d9d9" rx="4.5"/>
<rect x="165.8" y="522" width="37.3" height="36.8" fill="#1479f5" rx="4.5"/>
<rect x="207" y="522.8" width="37.3" height="36.8" fill="#d9d9d9" rx="4.5"/>
<rect x="207" y="522" width="37.3" height="36.8" fill="#fdfdfd" rx="4.5"/>
<rect x="165.8" y="566" width="37.3" height="36.8" fill="#d9d9d9" rx="4.5"/>
<rect x="165.8" y="565.2" width="37.3" height="36.8" fill="#fdfdfd" rx="4.5"/>
<rect x="207" y="566" width="37.3" height="36.8" fill="#d9d9d9" rx="4.5"/>
<rect x="207" y="565.2" width="37.3" height="36.8" fill="#fdfdfd" rx="4.5"/>
<rect x="165.8" y="609.2" width="37.3" height="36.8" fill="#d9d9d9" rx="4.5"/>
<rect x="165.8" y="608.4" width="37.3" height="36.8" fill="#fdfdfd" rx="4.5"/>
<rect x="207" y="609.2" width="37.3" height="36.8" fill="#d9d9d9" rx="4.5"/>
<rect x="207" y="608.4" width="37.3" height="36.8" fill="#fdfdfd" rx="4.5"/>
<rect x="165.8" y="657" width="37.3" height="36.8" fill="#d9d9d9" rx="4.5"/>
<rect x="165.8" y="656.2" width="37.3" height="36.8" fill="#fdfdfd" rx="4.5"/>
<rect x="207" y="657" width="37.3" height="36.8" fill="#d9d9d9" rx="4.5"/>
<rect x="207" y="656.2" width="37.3" height="36.8" fill="#fdfdfd" rx="4.5"/>
<rect x="165.8" y="700" width="78.8" height="37.6" fill="#d9d9d9" rx="4.5"/>
<rect x="165.8" y="699.2" width="78.8" height="37.6" fill="#fdfdfd" rx="4.5"/>
<g transform="translate(175 264.4) scale(1.03) translate(-181.3 -176.7)">
<path d="M181.3 176.7 L199.2 187.6 L193.3 191.3 L197.9 199.3 L191.6 201.4 L187 193.4 L181.3 197.6 Z" fill="#d2d2d2" stroke="#9a9a9a" stroke-width="0.9"/>
</g>
<line x1="225.6" y1="263" x2="225.6" y2="289.5" stroke="#111" stroke-width="2.3" />
<g transform="translate(-58.9 131.1)">
<path d="M236.8 184.5 L236.8 178.6 Q236.8 176.6 238.6 176.6 Q240.4 176.6 240.4 178.6 L240.4 183.5 L240.6 177.2 Q240.6 175.6 242.5 175.6 Q244.4 175.6 244.4 177.2 L244.4 183.5 L244.6 177.8 Q244.6 176.2 246.4 176.2 Q248.2 176.2 248.2 177.8 L248.3 184 L248.6 179.6 Q248.7 178 250.5 178 Q252.4 178.1 252.4 179.8 L252.5 193 Q252.6 198.5 250.6 201.6 L238.8 201.6 Q236.5 197.5 233.5 192.8 L231.8 189.6 Q231.2 188 232.6 187.5 Q234.3 187 235.5 188.6 L236.8 190.5 Z" fill="url(#gHand)" stroke="#8a8a8a" stroke-width="0.8"/>
</g>
<line x1="226.5" y1="321" x2="237.6" y2="331.6" stroke="#3f3f3f" stroke-width="2.6" stroke-linecap="round"/>
<circle cx="220.3" cy="314.6" r="5.6" fill="#eef6ee" stroke="#9a9a9a" stroke-width="1.8" />
<line x1="217" y1="314.6" x2="223.6" y2="314.6" stroke="#3c9a46" stroke-width="1.5" />
<line x1="220.3" y1="311.3" x2="220.3" y2="317.9" stroke="#3c9a46" stroke-width="1.5" />
<g transform="translate(184.8 367.8)"><ellipse rx="12.2" ry="8" fill="#000"/><ellipse rx="3.6" ry="6.4" fill="#fff" transform="rotate(-28)"/></g>
<line x1="213.1" y1="365.3" x2="238.2" y2="365.3" stroke="#000" stroke-width="1.6" />
<rect x="216.9" y="365" width="18" height="7" fill="#000"/>
<g transform="translate(183.4 418.8) rotate(-22)"><ellipse rx="5.4" ry="3.6" fill="#000"/><ellipse rx="3.35" ry="1.62" fill="#fff" transform="rotate(-10)"/></g>
<line x1="188.6" y1="398" x2="188.6" y2="418" stroke="#000" stroke-width="1.2" />
<rect x="217" y="408" width="17" height="5.2" fill="#000"/>
<line x1="212.7" y1="413.4" x2="238.4" y2="413.4" stroke="#000" stroke-width="1.5" />
<ellipse cx="184" cy="461.8" rx="5.4" ry="3.8" fill="#000" transform="rotate(-22 184 461.8)" />
<line x1="189" y1="441" x2="189" y2="461" stroke="#000" stroke-width="1.2" />
<path d="M222 442 L229.6 450.3 L225.3 455.8 L229.6 462.8 Q226 461.2 224.5 463 Q223.8 465 226 466.5 Q221.5 465.5 221.8 461.2 Q222.7 458.6 226.2 459.8 L221.6 453.5 L225.8 448.3 Z" fill="#000"/>
<ellipse cx="181.5" cy="505.4" rx="5.3" ry="3.7" fill="#000" transform="rotate(-22 181.5 505.4)" />
<line x1="186.3" y1="484.3" x2="186.3" y2="505" stroke="#000" stroke-width="1.2" />
<path d="M186.3 484.3 C187 489 193.8 492 192.5 500.5 Q192.6 504 191.6 506.5 Q193 497.5 186.3 492.5 Z" fill="#000"/>
<circle cx="222.4" cy="489.3" r="3.4" fill="#000" />
<path d="M219.5 491.5 Q227 492.8 232.1 486.6 L225.8 509.4" fill="none" stroke="#000" stroke-width="2"/>
<ellipse cx="180.9" cy="548.6" rx="5.3" ry="3.7" fill="#0a1a40" transform="rotate(-22 180.9 548.6)" />
<line x1="185.9" y1="528.7" x2="185.9" y2="548" stroke="#0a1a40" stroke-width="1.2" />
<path d="M185.9 528.8 C 186.75 533.05 193.55 535.6 191.43 543.25 C 192.28 537.3 186.75 535.6 185.9 533.05 Z" fill="#0a1a40"/>
<path d="M185.9 533.05 C 186.75 537.3 193.55 539.85 191.43 547.5 C 192.28 541.55 186.75 539.85 185.9 537.3 Z" fill="#0a1a40"/>
<line x1="231.5" y1="529.4" x2="224.6" y2="552.5" stroke="#000" stroke-width="1.6" />
<circle cx="225.36" cy="532.06" r="2.6" fill="#000" />
<path d="M225.36 533.36 Q229.36 533.86 231.66 529.36" fill="none" stroke="#000" stroke-width="1.2"/>
<circle cx="223.54" cy="538.16" r="2.6" fill="#000" />
<path d="M223.54 539.46 Q227.54 539.96 229.84 535.46" fill="none" stroke="#000" stroke-width="1.2"/>
<ellipse cx="181.5" cy="593" rx="5.1" ry="3.6" fill="#000" transform="rotate(-22 181.5 593)" />
<line x1="185.9" y1="571.2" x2="185.9" y2="592.5" stroke="#000" stroke-width="1.2" />
<path d="M185.9 571.3 C 186.7 575.3 193.1 577.7 191.1 584.9 C 191.9 579.3 186.7 577.7 185.9 575.3 Z" fill="#000"/>
<path d="M185.9 574.74 C 186.7 578.74 193.1 581.14 191.1 588.34 C 191.9 582.74 186.7 581.14 185.9 578.74 Z" fill="#000"/>
<path d="M185.9 578.18 C 186.7 582.18 193.1 584.58 191.1 591.78 C 191.9 586.18 186.7 584.58 185.9 582.18 Z" fill="#000"/>
<line x1="230.2" y1="571.2" x2="220.3" y2="595.6" stroke="#000" stroke-width="1.6" />
<circle cx="224" cy="573.89" r="2.2" fill="#000" />
<path d="M224 575.19 Q228 575.69 230.3 571.19" fill="none" stroke="#000" stroke-width="1.2"/>
<circle cx="221.96" cy="578.93" r="2.2" fill="#000" />
<path d="M221.96 580.23 Q225.96 580.73 228.26 576.23" fill="none" stroke="#000" stroke-width="1.2"/>
<circle cx="219.91" cy="583.97" r="2.2" fill="#000" />
<path d="M219.91 585.27 Q223.91 585.77 226.21 581.27" fill="none" stroke="#000" stroke-width="1.2"/>
<ellipse cx="181.5" cy="636.8" rx="4.6" ry="3.2" fill="#000" transform="rotate(-22 181.5 636.8)" />
<line x1="185.1" y1="613.7" x2="185.1" y2="636.5" stroke="#000" stroke-width="1.1" />
<path d="M185.1 613.8 C 185.82 617.4 191.58 619.56 189.78 626.04 C 190.5 621 185.82 619.56 185.1 617.4 Z" fill="#000"/>
<path d="M185.1 616.46 C 185.82 620.06 191.58 622.22 189.78 628.7 C 190.5 623.66 185.82 622.22 185.1 620.06 Z" fill="#000"/>
<path d="M185.1 619.13 C 185.82 622.73 191.58 624.89 189.78 631.37 C 190.5 626.33 185.82 624.89 185.1 622.73 Z" fill="#000"/>
<path d="M185.1 621.79 C 185.82 625.39 191.58 627.55 189.78 634.03 C 190.5 628.99 185.82 627.55 185.1 625.39 Z" fill="#000"/>
<line x1="230.2" y1="614.4" x2="222.8" y2="639.4" stroke="#000" stroke-width="1.6" />
<circle cx="224.05" cy="617.1" r="1.9" fill="#000" />
<path d="M224.05 618.4 Q228.05 618.9 230.35 614.4" fill="none" stroke="#000" stroke-width="1.2"/>
<circle cx="222.8" cy="621.34" r="1.9" fill="#000" />
<path d="M222.8 622.64 Q226.8 623.14 229.1 618.64" fill="none" stroke="#000" stroke-width="1.2"/>
<circle cx="221.54" cy="625.58" r="1.9" fill="#000" />
<path d="M221.54 626.88 Q225.54 627.38 227.84 622.88" fill="none" stroke="#000" stroke-width="1.2"/>
<circle cx="220.29" cy="629.82" r="1.9" fill="#000" />
<path d="M220.29 631.12 Q224.29 631.62 226.59 627.12" fill="none" stroke="#000" stroke-width="1.2"/>
<ellipse cx="174" cy="684.8" rx="3.4" ry="2.5" fill="#000" transform="rotate(-22 174 684.8)" />
<line x1="176.5" y1="667.5" x2="176.5" y2="684" stroke="#000" stroke-width="1.2" />
<ellipse cx="184.6" cy="684.8" rx="3.4" ry="2.5" fill="#000" transform="rotate(-22 184.6 684.8)" />
<line x1="187.1" y1="667.5" x2="187.1" y2="684" stroke="#000" stroke-width="1.2" />
<ellipse cx="194.6" cy="684.8" rx="3.4" ry="2.5" fill="#000" transform="rotate(-22 194.6 684.8)" />
<line x1="197.1" y1="667.5" x2="197.1" y2="684" stroke="#000" stroke-width="1.2" />
<path d="M172.2 670.4 L172.2 667 L181.5 667 M188.5 667 L197.5 667 L197.5 670.4" fill="none" stroke="#111" stroke-width="1.1"/>
<text x="185.2" y="670.8" font-size="6.8" fill="#111" text-anchor="middle" font-weight="normal" font-family="Liberation Serif" font-style="italic" >3</text>
<ellipse cx="215.3" cy="681.2" rx="3.4" ry="2.5" fill="#000" transform="rotate(-22 215.3 681.2)" />
<ellipse cx="226.5" cy="683.6" rx="3.4" ry="2.5" fill="#000" transform="rotate(-22 226.5 683.6)" />
<ellipse cx="235.9" cy="683.6" rx="3.4" ry="2.5" fill="#000" transform="rotate(-22 235.9 683.6)" />
<line x1="217.8" y1="669.4" x2="217.8" y2="680.5" stroke="#000" stroke-width="1.1" />
<line x1="228.6" y1="671.9" x2="228.6" y2="683" stroke="#000" stroke-width="1.1" />
<line x1="238" y1="668.8" x2="238" y2="683" stroke="#000" stroke-width="1.1" />
<path d="M217.6 669 L228.8 671.6 L228.8 673.9 L217.6 671.3 Z" fill="#000"/>
<path d="M217.1 668 Q227.8 660 237.8 669.4" fill="none" stroke="#111" stroke-width="1.3"/>
<ellipse cx="197.1" cy="721.2" rx="5.1" ry="3.6" fill="#000" transform="rotate(-22 197.1 721.2)" />
<ellipse cx="213.4" cy="721.2" rx="5.1" ry="3.6" fill="#000" transform="rotate(-22 213.4 721.2)" />
<line x1="201.6" y1="705.6" x2="201.6" y2="720.5" stroke="#000" stroke-width="1.2" />
<line x1="217.7" y1="705.6" x2="217.7" y2="720.5" stroke="#000" stroke-width="1.2" />
<path d="M196.5 726 Q205.3 732.8 214 726 Q205.3 730.4 196.5 726 Z" fill="#111" stroke="#111" stroke-width="0.7"/>
<rect x="167.8" y="748.4" width="16.2" height="16.2" fill="#d9d9d9" rx="4.5"/>
<rect x="167.8" y="747.6" width="16.2" height="16.2" fill="#1479f5" rx="4.5"/>
<text x="175.9" y="760" font-size="10.8" fill="#fff" text-anchor="middle" font-weight="bold" font-family="Liberation Sans" font-style="normal" stroke="#fff" stroke-width="0.25" >1</text>
<rect x="189" y="748.4" width="16.3" height="16.2" fill="#d9d9d9" rx="4.5"/>
<rect x="189" y="747.6" width="16.3" height="16.2" fill="#fdfdfd" rx="4.5"/>
<text x="197.15" y="760" font-size="10.8" fill="#222" text-anchor="middle" font-weight="normal" font-family="Liberation Sans" font-style="normal" stroke="#222" stroke-width="0.25" >2</text>
<rect x="211.5" y="748.4" width="15.6" height="16.2" fill="#d9d9d9" rx="4.5"/>
<rect x="211.5" y="747.6" width="15.6" height="16.2" fill="#fdfdfd" rx="4.5"/>
<text x="219.3" y="760" font-size="10.8" fill="#222" text-anchor="middle" font-weight="normal" font-family="Liberation Sans" font-style="normal" stroke="#222" stroke-width="0.25" >3</text>
<rect x="232.8" y="748.4" width="16.2" height="16.2" fill="#d9d9d9" rx="4.5"/>
<rect x="232.8" y="747.6" width="16.2" height="16.2" fill="#fdfdfd" rx="4.5"/>
<text x="240.9" y="760" font-size="10.8" fill="#222" text-anchor="middle" font-weight="normal" font-family="Liberation Sans" font-style="normal" stroke="#222" stroke-width="0.25" >4</text>
<rect x="278" y="249" width="1262" height="579" fill="#ffffff"/>
<rect x="1540" y="249" width="12.5" height="579" fill="#f8f8f8"/>
<line x1="1540.2" y1="249" x2="1540.2" y2="828" stroke="#ececec" stroke-width="0.8" />
<rect x="1543.4" y="251.2" width="6.5" height="177.2" fill="#7b7b7b" rx="3.2"/>
<rect x="280.6" y="820.1" width="1257" height="5.6" fill="#7b7b7b" rx="2.8"/>
<text x="909" y="393" font-size="59.2" fill="#000" text-anchor="middle" font-weight="normal" font-family="Liberation Serif" font-style="normal" stroke="#000" stroke-width="0.7">Grooving</text>
<line x1="362" y1="610.6" x2="1455.8" y2="610.6" stroke="#1a1a1a" stroke-width="1.15" />
<line x1="362" y1="622.6" x2="1455.8" y2="622.6" stroke="#1a1a1a" stroke-width="1.15" />
<line x1="362" y1="634.7" x2="1455.8" y2="634.7" stroke="#1a1a1a" stroke-width="1.15" />
<line x1="362" y1="646.7" x2="1455.8" y2="646.7" stroke="#1a1a1a" stroke-width="1.15" />
<line x1="362" y1="658.8" x2="1455.8" y2="658.8" stroke="#1a1a1a" stroke-width="1.15" />
<line x1="1455.3" y1="610.1" x2="1455.3" y2="659.3" stroke="#111" stroke-width="1.4" />
<rect x="372.3" y="599.1" width="4.6" height="47" fill="#000"/>
<rect x="379.2" y="599.1" width="2.2" height="47" fill="#000"/>
<path d="M385.4 601.3 C 392.4 597.7 403.2 599.7 403.2 609.6 C 403.2 620.1 394.4 621.4 386.9 618.4 L381.2 622.6 L384.6 615.8 C 389.9 617.4 397 617 397 609.6 C 397 603.7 392.4 601.7 387.9 603.1 Z" fill="#000"/>
<circle cx="388.6" cy="604.9" r="4" fill="#000" />
<g transform="translate(0 1245.2) scale(1 -1)">
<path d="M385.4 601.3 C 392.4 597.7 403.2 599.7 403.2 609.6 C 403.2 620.1 394.4 621.4 386.9 618.4 L381.2 622.6 L384.6 615.8 C 389.9 617.4 397 617 397 609.6 C 397 603.7 392.4 601.7 387.9 603.1 Z" fill="#000"/>
<circle cx="388.6" cy="604.9" r="4" fill="#000" />
</g>
<line x1="420.5" y1="632" x2="420.5" y2="664" stroke="#000" stroke-width="1.7" />
<line x1="425.5" y1="630.5" x2="425.5" y2="663" stroke="#000" stroke-width="1.7" />
<path d="M417 641.15 L429 638.15 L429 642.25 L417 645.25 Z" fill="#000"/>
<path d="M417 652.75 L429 649.75 L429 653.85 L417 656.85 Z" fill="#000"/>
<line x1="432.7" y1="606.7" x2="432.7" y2="638.7" stroke="#000" stroke-width="1.7" />
<line x1="437.7" y1="605.2" x2="437.7" y2="637.7" stroke="#000" stroke-width="1.7" />
<path d="M429.2 615.85 L441.2 612.85 L441.2 616.95 L429.2 619.95 Z" fill="#000"/>
<path d="M429.2 627.45 L441.2 624.45 L441.2 628.55 L429.2 631.55 Z" fill="#000"/>
<line x1="445" y1="625.5" x2="445" y2="657.5" stroke="#000" stroke-width="1.7" />
<line x1="450" y1="624" x2="450" y2="656.5" stroke="#000" stroke-width="1.7" />
<path d="M441.5 634.65 L453.5 631.65 L453.5 635.75 L441.5 638.75 Z" fill="#000"/>
<path d="M441.5 646.25 L453.5 643.25 L453.5 647.35 L441.5 650.35 Z" fill="#000"/>
<line x1="457.3" y1="600.7" x2="457.3" y2="632.7" stroke="#000" stroke-width="1.7" />
<line x1="462.3" y1="599.2" x2="462.3" y2="631.7" stroke="#000" stroke-width="1.7" />
<path d="M453.8 609.85 L465.8 606.85 L465.8 610.95 L453.8 613.95 Z" fill="#000"/>
<path d="M453.8 621.45 L465.8 618.45 L465.8 622.55 L453.8 625.55 Z" fill="#000"/>
<text x="485.2" y="634.6" font-size="33" fill="#000" text-anchor="middle" font-weight="bold" font-family="Liberation Serif" font-style="normal" >4</text>
<text x="485.2" y="657.9" font-size="33" fill="#000" text-anchor="middle" font-weight="bold" font-family="Liberation Serif" font-style="normal" >4</text>
<line x1="520.6" y1="613" x2="506.6" y2="657.5" stroke="#000" stroke-width="1.9" />
<circle cx="514.5" cy="614.6" r="3.2" fill="#000" />
<path d="M514.5 617.2 Q519.5 617.8 521.7 612.4" fill="none" stroke="#000" stroke-width="1.3"/>
<circle cx="510.4" cy="627.2" r="3.2" fill="#000" />
<path d="M510.4 629.8 Q515.4 630.4 517.6 625" fill="none" stroke="#000" stroke-width="1.3"/>
<circle cx="506.8" cy="639.4" r="3.2" fill="#000" />
<path d="M506.8 642 Q511.8 642.6 514 637.2" fill="none" stroke="#000" stroke-width="1.3"/>
<line x1="550.2" y1="538.5" x2="573" y2="538.5" stroke="#111" stroke-width="1.1" />
<line x1="550.2" y1="550.4" x2="573" y2="550.4" stroke="#111" stroke-width="1.1" />
<line x1="550.2" y1="562.6" x2="573" y2="562.6" stroke="#111" stroke-width="1.1" />
<line x1="550.2" y1="574.3" x2="573" y2="574.3" stroke="#111" stroke-width="1.1" />
<line x1="550.2" y1="586.4" x2="573" y2="586.4" stroke="#111" stroke-width="1.1" />
<line x1="550.2" y1="598.3" x2="573" y2="598.3" stroke="#111" stroke-width="1.1" />
<ellipse cx="561.6" cy="538.8" rx="7.9" ry="5.6" fill="#000" transform="rotate(-22 561.6 538.8)" />
<line x1="554.5" y1="539" x2="554.5" y2="634" stroke="#000" stroke-width="1.2" />
<path d="M554.5 634 C 556.5 622 566.5 616 562.5 602 C 564 615 555.5 619 554.5 627 Z" fill="#000"/>
<path d="M554.5 626 C 556.5 614 566.5 608 562.5 594 C 564 607 555.5 611 554.5 619 Z" fill="#000"/>
<path d="M577.5 627.5 L587 638.2 L581.6 645.2 L587.6 655.2 Q582.8 652.8 580.6 655.6 Q579.4 658.8 582.8 663 Q576 660 576.6 654 Q577.6 649.5 582.4 651 L576.4 643.2 L581.8 636.6 Z" fill="#000"/>
<rect x="598.5" y="622.6" width="13.5" height="6" fill="#000"/>
<rect x="632" y="622.6" width="12.7" height="6" fill="#000"/>
<rect x="667.7" y="622.6" width="13.3" height="6" fill="#000"/>
<line x1="688" y1="670.5" x2="710.7" y2="670.5" stroke="#111" stroke-width="1.1" />
<line x1="688" y1="682.4" x2="710.7" y2="682.4" stroke="#111" stroke-width="1.1" />
<line x1="688" y1="694.6" x2="710.7" y2="694.6" stroke="#111" stroke-width="1.1" />
<ellipse cx="699.6" cy="700.5" rx="7.9" ry="5.6" fill="#000" transform="rotate(-22 699.6 700.5)" />
<line x1="692.9" y1="700.5" x2="692.9" y2="741.4" stroke="#000" stroke-width="1.2" />
<line x1="747" y1="562.6" x2="770" y2="562.6" stroke="#111" stroke-width="1.1" />
<line x1="747" y1="574.3" x2="770" y2="574.3" stroke="#111" stroke-width="1.1" />
<line x1="747" y1="586.4" x2="770" y2="586.4" stroke="#111" stroke-width="1.1" />
<line x1="747" y1="598.3" x2="770" y2="598.3" stroke="#111" stroke-width="1.1" />
<ellipse cx="758.4" cy="556.8" rx="7.9" ry="5.6" fill="#000" transform="rotate(-22 758.4 556.8)" />
<line x1="751.2" y1="556.8" x2="751.2" y2="720" stroke="#000" stroke-width="1.2" />
<path d="M692.3 736.1 L751.8 715 L751.8 720.3 L692.3 741.4 Z" fill="#000"/>
<path d="M692.3 728 L751.8 707.2 L751.8 712.5 L692.3 733.3 Z" fill="#000"/>
<line x1="793.4" y1="562.6" x2="816.8" y2="562.6" stroke="#111" stroke-width="1.1" />
<line x1="793.4" y1="574.3" x2="816.8" y2="574.3" stroke="#111" stroke-width="1.1" />
<line x1="793.4" y1="586.4" x2="816.8" y2="586.4" stroke="#111" stroke-width="1.1" />
<line x1="793.4" y1="598.3" x2="816.8" y2="598.3" stroke="#111" stroke-width="1.1" />
<ellipse cx="805.3" cy="562.5" rx="7.9" ry="5.6" fill="#000" transform="rotate(-22 805.3 562.5)" />
<line x1="798" y1="562.5" x2="798" y2="634" stroke="#000" stroke-width="1.2" />
<path d="M798 634 C 800 622 810 616 806 602 C 807.5 615 799 619 798 627 Z" fill="#000"/>
<path d="M798 626 C 800 614 810 608 806 594 C 807.5 607 799 611 798 619 Z" fill="#000"/>
<line x1="847" y1="670.5" x2="870" y2="670.5" stroke="#111" stroke-width="1.1" />
<line x1="847" y1="682.4" x2="870" y2="682.4" stroke="#111" stroke-width="1.1" />
<line x1="847" y1="694.6" x2="870" y2="694.6" stroke="#111" stroke-width="1.1" />
<ellipse cx="858.5" cy="700.6" rx="7.9" ry="5.6" fill="#000" transform="rotate(-22 858.5 700.6)" />
<line x1="866.4" y1="521" x2="866.4" y2="700" stroke="#000" stroke-width="1.2" />
<rect x="865.8" y="521" width="156.6" height="5.6" fill="#000"/>
<rect x="865.8" y="530" width="156.6" height="5.6" fill="#000"/>
<line x1="916" y1="562.6" x2="939.2" y2="562.6" stroke="#111" stroke-width="1.1" />
<line x1="916" y1="574.5" x2="939.2" y2="574.5" stroke="#111" stroke-width="1.1" />
<line x1="916" y1="586.4" x2="939.2" y2="586.4" stroke="#111" stroke-width="1.1" />
<line x1="916" y1="598.3" x2="939.2" y2="598.3" stroke="#111" stroke-width="1.1" />
<ellipse cx="927.7" cy="563" rx="7.9" ry="5.6" fill="#000" transform="rotate(-22 927.7 563)" />
<line x1="934.4" y1="535" x2="934.4" y2="562" stroke="#000" stroke-width="1.2" />
<ellipse cx="1014.5" cy="664.6" rx="7.9" ry="5.6" fill="#000" transform="rotate(-22 1014.5 664.6)" />
<line x1="1022" y1="521" x2="1022" y2="662" stroke="#000" stroke-width="1.2" />
<line x1="1076" y1="670.5" x2="1099" y2="670.5" stroke="#111" stroke-width="1.1" />
<line x1="1076" y1="682.4" x2="1099" y2="682.4" stroke="#111" stroke-width="1.1" />
<line x1="1076" y1="694.6" x2="1099" y2="694.6" stroke="#111" stroke-width="1.1" />
<ellipse cx="1088.2" cy="694.8" rx="7.9" ry="5.6" fill="#000" transform="rotate(-22 1088.2 694.8)" />
<line x1="1095.2" y1="636" x2="1095.2" y2="693" stroke="#000" stroke-width="1.2" />
<path d="M1095.2 636 C 1096 645 1106 652 1103.5 670 C 1105 655 1097 650 1095.2 644 Z" fill="#000"/>
<path d="M1095.2 643 C 1096 652 1106 659 1103.5 677 C 1105 662 1097 657 1095.2 651 Z" fill="#000"/>
<line x1="1143.8" y1="574.3" x2="1167.9" y2="574.3" stroke="#111" stroke-width="1.1" />
<line x1="1143.8" y1="586.4" x2="1167.9" y2="586.4" stroke="#111" stroke-width="1.1" />
<line x1="1143.8" y1="598.3" x2="1167.9" y2="598.3" stroke="#111" stroke-width="1.1" />
<ellipse cx="1156" cy="568.2" rx="7.9" ry="5.6" fill="#000" transform="rotate(-22 1156 568.2)" />
<line x1="1149" y1="568.2" x2="1149" y2="692.8" stroke="#000" stroke-width="1.2" />
<ellipse cx="1249.2" cy="652.4" rx="7.9" ry="5.6" fill="#000" transform="rotate(-22 1249.2 652.4)" />
<line x1="1241.2" y1="652.4" x2="1241.2" y2="690" stroke="#000" stroke-width="1.2" />
<line x1="1312.3" y1="574.3" x2="1335.6" y2="574.3" stroke="#111" stroke-width="1.1" />
<line x1="1312.3" y1="586.4" x2="1335.6" y2="586.4" stroke="#111" stroke-width="1.1" />
<line x1="1312.3" y1="598.3" x2="1335.6" y2="598.3" stroke="#111" stroke-width="1.1" />
<ellipse cx="1325.2" cy="574.2" rx="7.9" ry="5.6" fill="#000" transform="rotate(-22 1325.2 574.2)" />
<line x1="1317.4" y1="574.2" x2="1317.4" y2="695.6" stroke="#000" stroke-width="1.2" />
<path d="M1148.4 678.4 L1318 682.5 L1318 688 L1148.4 683.9 Z" fill="#000"/>
<path d="M1148.4 687.6 L1318 691 L1318 696.3 L1148.4 692.9 Z" fill="#000"/>
<g style="mix-blend-mode:multiply">
<circle cx="856" cy="536.5" r="25.5" fill="#c4e5f8" />
<ellipse cx="888" cy="519.5" rx="11" ry="4.5" fill="#cdeedb" transform="rotate(-18 888 519.5)"/>
<circle cx="871.5" cy="555.5" r="17.6" fill="#f9cfc1" />
<circle cx="866" cy="547" r="3" fill="#fde6de" />
<g fill="none" stroke="#d2d2d2" stroke-width="4.2">
<path d="M913 521 H941 M917 527 H938 M911 533.5 H943 M927 516.5 V533 M923 534 L915 541 M921 536 Q932 541 942 541 M938 535 L917 542"/>
<path d="M969 518 L972 521 M967 527 L971 530 M966 541 L972 533 M976 518 H1001 M979 519 V541 M985 524 L997 522 M985 530 L998 528 M988 530 V541 M992 531 L1001 541"/>
<path d="M1030 540 V518.5 H1060 V538 Q1060 541 1056 540 M1036 524 L1046 536 M1046 524 L1036 536 M1047 524 L1056 536 M1056 524 L1047 536"/>
</g>
<text x="986.8" y="563" font-size="22.5" fill="#d4d4d4" text-anchor="middle" font-weight="bold" font-family="Liberation Serif" font-style="normal" >www.macpie.cn</text>
</g>
<text x="366.4" y="791.2" font-size="13.5" fill="#000" text-anchor="middle" font-weight="normal" font-family="Liberation Sans" font-style="normal" stroke="#000" stroke-width="0.25" >2</text>
<g clip-path="url(#clipScore)">
<line x1="362" y1="803" x2="1455.8" y2="803" stroke="#1a1a1a" stroke-width="1.15" />
<line x1="362" y1="815.1" x2="1455.8" y2="815.1" stroke="#1a1a1a" stroke-width="1.15" />
<rect x="372.3" y="791.5" width="4.6" height="47" fill="#000"/>
<rect x="379.2" y="791.5" width="2.2" height="47" fill="#000"/>
<path d="M385.4 793.7 C 392.4 790.1 403.2 792.1 403.2 802 C 403.2 812.5 394.4 813.8 386.9 810.8 L381.2 815 L384.6 808.2 C 389.9 809.8 397 809.4 397 802 C 397 796.1 392.4 794.1 387.9 795.5 Z" fill="#000"/>
<circle cx="388.6" cy="797.3" r="4" fill="#000" />
<g transform="translate(0 1630) scale(1 -1)">
<path d="M385.4 793.7 C 392.4 790.1 403.2 792.1 403.2 802 C 403.2 812.5 394.4 813.8 386.9 810.8 L381.2 815 L384.6 808.2 C 389.9 809.8 397 809.4 397 802 C 397 796.1 392.4 794.1 387.9 795.5 Z" fill="#000"/>
<circle cx="388.6" cy="797.3" r="4" fill="#000" />
</g>
<line x1="432.8" y1="799.1" x2="432.8" y2="831.1" stroke="#000" stroke-width="1.7" />
<line x1="437.8" y1="797.6" x2="437.8" y2="830.1" stroke="#000" stroke-width="1.7" />
<path d="M429.3 808.25 L441.3 805.25 L441.3 809.35 L429.3 812.35 Z" fill="#000"/>
<path d="M429.3 819.85 L441.3 816.85 L441.3 820.95 L429.3 823.95 Z" fill="#000"/>
<line x1="457.1" y1="793.1" x2="457.1" y2="825.1" stroke="#000" stroke-width="1.7" />
<line x1="462.1" y1="791.6" x2="462.1" y2="824.1" stroke="#000" stroke-width="1.7" />
<path d="M453.6 802.25 L465.6 799.25 L465.6 803.35 L453.6 806.35 Z" fill="#000"/>
<path d="M453.6 813.85 L465.6 810.85 L465.6 814.95 L453.6 817.95 Z" fill="#000"/>
<line x1="1445.3" y1="802.5" x2="1445.3" y2="828" stroke="#111" stroke-width="1.5" />
<rect x="1450.4" y="802.5" width="5.3" height="33" fill="#000"/>
</g>
<rect x="1552.5" y="249" width="24" height="648" fill="#e9e9e9"/>
<rect x="1552.5" y="249" width="24" height="35" fill="#e3e3e3"/>
<path d="M1576.4 249 L1576.4 283.8 L1554 295 L1554 413 L1576.4 425.3" fill="none" stroke="#707070" stroke-width="1"/>
<line x1="1576.4" y1="425.3" x2="1576.4" y2="888" stroke="#b4b4b4" stroke-width="1" />
<path d="M1565 296 L1569.6 300.5 L1565 305" fill="none" stroke="#a0a0a0" stroke-width="0.9"/>
<path d="M1565 404.5 L1569.6 409 L1565 413.5" fill="none" stroke="#a0a0a0" stroke-width="0.9"/>
<text x="0" y="0" font-size="10.2" fill="#1e1e1e" stroke="#1e1e1e" stroke-width="0.25" font-family="Liberation Sans" text-anchor="middle" transform="translate(1571 354) rotate(-90)">Hide Toolbox</text>
<rect x="1576.9" y="249" width="168" height="640" fill="#ebebeb"/>
<rect x="1744.5" y="268" width="11.5" height="621" fill="#f8f8f8"/>
<rect x="1747.8" y="437.3" width="5.9" height="169" fill="#c6c6c6" rx="2.9"/>
<rect x="1585" y="258.8" width="47.1" height="36.7" fill="#d9d9d9" rx="4.5"/>
<rect x="1585" y="258" width="47.1" height="36.7" fill="#fdfdfd" rx="4.5"/>
<line x1="1596" y1="270.2" x2="1621" y2="270.2" stroke="#111" stroke-width="1.2" />
<line x1="1596" y1="274.45" x2="1621" y2="274.45" stroke="#111" stroke-width="1.2" />
<line x1="1596" y1="278.7" x2="1621" y2="278.7" stroke="#111" stroke-width="1.2" />
<line x1="1596" y1="282.95" x2="1621" y2="282.95" stroke="#111" stroke-width="1.2" />
<line x1="1596" y1="287.2" x2="1621" y2="287.2" stroke="#111" stroke-width="1.2" />
<line x1="1598.7" y1="266.6" x2="1598.7" y2="276" stroke="#000" stroke-width="1.1" />
<line x1="1601.3" y1="266.2" x2="1601.3" y2="275.6" stroke="#000" stroke-width="1.1" />
<path d="M1596.8 270.2 L1603.2 268.6 L1603.2 270.6 L1596.8 272.2 Z" fill="#000"/>
<path d="M1596.8 273.6 L1603.2 272 L1603.2 274 L1596.8 275.6 Z" fill="#000"/>
<rect x="1637.1" y="258.8" width="46.7" height="36.7" fill="#d9d9d9" rx="4.5"/>
<rect x="1637.1" y="258" width="46.7" height="36.7" fill="#fdfdfd" rx="4.5"/>
<line x1="1648.1" y1="270.2" x2="1673.1" y2="270.2" stroke="#111" stroke-width="1.2" />
<line x1="1648.1" y1="274.45" x2="1673.1" y2="274.45" stroke="#111" stroke-width="1.2" />
<line x1="1648.1" y1="278.7" x2="1673.1" y2="278.7" stroke="#111" stroke-width="1.2" />
<line x1="1648.1" y1="282.95" x2="1673.1" y2="282.95" stroke="#111" stroke-width="1.2" />
<line x1="1648.1" y1="287.2" x2="1673.1" y2="287.2" stroke="#111" stroke-width="1.2" />
<line x1="1650.8" y1="266.6" x2="1650.8" y2="276" stroke="#000" stroke-width="1.1" />
<line x1="1653.4" y1="266.2" x2="1653.4" y2="275.6" stroke="#000" stroke-width="1.1" />
<path d="M1648.9 270.2 L1655.3 268.6 L1655.3 270.6 L1648.9 272.2 Z" fill="#000"/>
<path d="M1648.9 273.6 L1655.3 272 L1655.3 274 L1648.9 275.6 Z" fill="#000"/>
<line x1="1655.3" y1="263.6" x2="1655.3" y2="273" stroke="#000" stroke-width="1.1" />
<line x1="1657.9" y1="263.2" x2="1657.9" y2="272.6" stroke="#000" stroke-width="1.1" />
<path d="M1653.4 267.2 L1659.8 265.6 L1659.8 267.6 L1653.4 269.2 Z" fill="#000"/>
<path d="M1653.4 270.6 L1659.8 269 L1659.8 271 L1653.4 272.6 Z" fill="#000"/>
<rect x="1689.2" y="258.8" width="47.1" height="36.7" fill="#d9d9d9" rx="4.5"/>
<rect x="1689.2" y="258" width="47.1" height="36.7" fill="#fdfdfd" rx="4.5"/>
<line x1="1700.2" y1="270.2" x2="1725.2" y2="270.2" stroke="#111" stroke-width="1.2" />
<line x1="1700.2" y1="274.45" x2="1725.2" y2="274.45" stroke="#111" stroke-width="1.2" />
<line x1="1700.2" y1="278.7" x2="1725.2" y2="278.7" stroke="#111" stroke-width="1.2" />
<line x1="1700.2" y1="282.95" x2="1725.2" y2="282.95" stroke="#111" stroke-width="1.2" />
<line x1="1700.2" y1="287.2" x2="1725.2" y2="287.2" stroke="#111" stroke-width="1.2" />
<line x1="1702.9" y1="266.6" x2="1702.9" y2="276" stroke="#000" stroke-width="1.1" />
<line x1="1705.5" y1="266.2" x2="1705.5" y2="275.6" stroke="#000" stroke-width="1.1" />
<path d="M1701 270.2 L1707.4 268.6 L1707.4 270.6 L1701 272.2 Z" fill="#000"/>
<path d="M1701 273.6 L1707.4 272 L1707.4 274 L1701 275.6 Z" fill="#000"/>
<line x1="1707.4" y1="263.6" x2="1707.4" y2="273" stroke="#000" stroke-width="1.1" />
<line x1="1710" y1="263.2" x2="1710" y2="272.6" stroke="#000" stroke-width="1.1" />
<path d="M1705.5 267.2 L1711.9 265.6 L1711.9 267.6 L1705.5 269.2 Z" fill="#000"/>
<path d="M1705.5 270.6 L1711.9 269 L1711.9 271 L1705.5 272.6 Z" fill="#000"/>
<line x1="1711.9" y1="268.6" x2="1711.9" y2="278" stroke="#000" stroke-width="1.1" />
<line x1="1714.5" y1="268.2" x2="1714.5" y2="277.6" stroke="#000" stroke-width="1.1" />
<path d="M1710 272.2 L1716.4 270.6 L1716.4 272.6 L1710 274.2 Z" fill="#000"/>
<path d="M1710 275.6 L1716.4 274 L1716.4 276 L1710 277.6 Z" fill="#000"/>
<rect x="1585" y="301.7" width="47.1" height="37" fill="#d9d9d9" rx="4.5"/>
<rect x="1585" y="300.9" width="47.1" height="37" fill="#fdfdfd" rx="4.5"/>
<line x1="1596" y1="312.5" x2="1621" y2="312.5" stroke="#111" stroke-width="1.2" />
<line x1="1596" y1="316.75" x2="1621" y2="316.75" stroke="#111" stroke-width="1.2" />
<line x1="1596" y1="321" x2="1621" y2="321" stroke="#111" stroke-width="1.2" />
<line x1="1596" y1="325.25" x2="1621" y2="325.25" stroke="#111" stroke-width="1.2" />
<line x1="1596" y1="329.5" x2="1621" y2="329.5" stroke="#111" stroke-width="1.2" />
<line x1="1597.2" y1="312.9" x2="1597.2" y2="322.3" stroke="#000" stroke-width="1.1" />
<line x1="1599.8" y1="312.5" x2="1599.8" y2="321.9" stroke="#000" stroke-width="1.1" />
<path d="M1595.3 316.5 L1601.7 314.9 L1601.7 316.9 L1595.3 318.5 Z" fill="#000"/>
<path d="M1595.3 319.9 L1601.7 318.3 L1601.7 320.3 L1595.3 321.9 Z" fill="#000"/>
<line x1="1600.2" y1="308.4" x2="1600.2" y2="317.8" stroke="#000" stroke-width="1.1" />
<line x1="1602.8" y1="308" x2="1602.8" y2="317.4" stroke="#000" stroke-width="1.1" />
<path d="M1598.3 312 L1604.7 310.4 L1604.7 312.4 L1598.3 314 Z" fill="#000"/>
<path d="M1598.3 315.4 L1604.7 313.8 L1604.7 315.8 L1598.3 317.4 Z" fill="#000"/>
<line x1="1603.7" y1="315.4" x2="1603.7" y2="324.8" stroke="#000" stroke-width="1.1" />
<line x1="1606.3" y1="315" x2="1606.3" y2="324.4" stroke="#000" stroke-width="1.1" />
<path d="M1601.8 319 L1608.2 317.4 L1608.2 319.4 L1601.8 321 Z" fill="#000"/>
<path d="M1601.8 322.4 L1608.2 320.8 L1608.2 322.8 L1601.8 324.4 Z" fill="#000"/>
<line x1="1606.7" y1="310.9" x2="1606.7" y2="320.3" stroke="#000" stroke-width="1.1" />
<line x1="1609.3" y1="310.5" x2="1609.3" y2="319.9" stroke="#000" stroke-width="1.1" />
<path d="M1604.8 314.5 L1611.2 312.9 L1611.2 314.9 L1604.8 316.5 Z" fill="#000"/>
<path d="M1604.8 317.9 L1611.2 316.3 L1611.2 318.3 L1604.8 319.9 Z" fill="#000"/>
<line x1="1610.2" y1="306.9" x2="1610.2" y2="316.3" stroke="#000" stroke-width="1.1" />
<line x1="1612.8" y1="306.5" x2="1612.8" y2="315.9" stroke="#000" stroke-width="1.1" />
<path d="M1608.3 310.5 L1614.7 308.9 L1614.7 310.9 L1608.3 312.5 Z" fill="#000"/>
<path d="M1608.3 313.9 L1614.7 312.3 L1614.7 314.3 L1608.3 315.9 Z" fill="#000"/>
<line x1="1613.2" y1="313.4" x2="1613.2" y2="322.8" stroke="#000" stroke-width="1.1" />
<line x1="1615.8" y1="313" x2="1615.8" y2="322.4" stroke="#000" stroke-width="1.1" />
<path d="M1611.3 317 L1617.7 315.4 L1617.7 317.4 L1611.3 319 Z" fill="#000"/>
<path d="M1611.3 320.4 L1617.7 318.8 L1617.7 320.8 L1611.3 322.4 Z" fill="#000"/>
<line x1="1616.7" y1="317.9" x2="1616.7" y2="327.3" stroke="#000" stroke-width="1.1" />
<line x1="1619.3" y1="317.5" x2="1619.3" y2="326.9" stroke="#000" stroke-width="1.1" />
<path d="M1614.8 321.5 L1621.2 319.9 L1621.2 321.9 L1614.8 323.5 Z" fill="#000"/>
<path d="M1614.8 324.9 L1621.2 323.3 L1621.2 325.3 L1614.8 326.9 Z" fill="#000"/>
<rect x="1637.1" y="301.7" width="46.7" height="37" fill="#d9d9d9" rx="4.5"/>
<rect x="1637.1" y="300.9" width="46.7" height="37" fill="#fdfdfd" rx="4.5"/>
<line x1="1648.1" y1="312.5" x2="1673.1" y2="312.5" stroke="#111" stroke-width="1.2" />
<line x1="1648.1" y1="316.75" x2="1673.1" y2="316.75" stroke="#111" stroke-width="1.2" />
<line x1="1648.1" y1="321" x2="1673.1" y2="321" stroke="#111" stroke-width="1.2" />
<line x1="1648.1" y1="325.25" x2="1673.1" y2="325.25" stroke="#111" stroke-width="1.2" />
<line x1="1648.1" y1="329.5" x2="1673.1" y2="329.5" stroke="#111" stroke-width="1.2" />
<line x1="1649.3" y1="312.9" x2="1649.3" y2="322.3" stroke="#000" stroke-width="1.1" />
<line x1="1651.9" y1="312.5" x2="1651.9" y2="321.9" stroke="#000" stroke-width="1.1" />
<path d="M1647.4 316.5 L1653.8 314.9 L1653.8 316.9 L1647.4 318.5 Z" fill="#000"/>
<path d="M1647.4 319.9 L1653.8 318.3 L1653.8 320.3 L1647.4 321.9 Z" fill="#000"/>
<line x1="1652.3" y1="308.4" x2="1652.3" y2="317.8" stroke="#000" stroke-width="1.1" />
<line x1="1654.9" y1="308" x2="1654.9" y2="317.4" stroke="#000" stroke-width="1.1" />
<path d="M1650.4 312 L1656.8 310.4 L1656.8 312.4 L1650.4 314 Z" fill="#000"/>
<path d="M1650.4 315.4 L1656.8 313.8 L1656.8 315.8 L1650.4 317.4 Z" fill="#000"/>
<line x1="1655.8" y1="315.4" x2="1655.8" y2="324.8" stroke="#000" stroke-width="1.1" />
<line x1="1658.4" y1="315" x2="1658.4" y2="324.4" stroke="#000" stroke-width="1.1" />
<path d="M1653.9 319 L1660.3 317.4 L1660.3 319.4 L1653.9 321 Z" fill="#000"/>
<path d="M1653.9 322.4 L1660.3 320.8 L1660.3 322.8 L1653.9 324.4 Z" fill="#000"/>
<line x1="1658.8" y1="310.9" x2="1658.8" y2="320.3" stroke="#000" stroke-width="1.1" />
<line x1="1661.4" y1="310.5" x2="1661.4" y2="319.9" stroke="#000" stroke-width="1.1" />
<path d="M1656.9 314.5 L1663.3 312.9 L1663.3 314.9 L1656.9 316.5 Z" fill="#000"/>
<path d="M1656.9 317.9 L1663.3 316.3 L1663.3 318.3 L1656.9 319.9 Z" fill="#000"/>
<line x1="1662.3" y1="306.9" x2="1662.3" y2="316.3" stroke="#000" stroke-width="1.1" />
<line x1="1664.9" y1="306.5" x2="1664.9" y2="315.9" stroke="#000" stroke-width="1.1" />
<path d="M1660.4 310.5 L1666.8 308.9 L1666.8 310.9 L1660.4 312.5 Z" fill="#000"/>
<path d="M1660.4 313.9 L1666.8 312.3 L1666.8 314.3 L1660.4 315.9 Z" fill="#000"/>
<line x1="1665.3" y1="313.4" x2="1665.3" y2="322.8" stroke="#000" stroke-width="1.1" />
<line x1="1667.9" y1="313" x2="1667.9" y2="322.4" stroke="#000" stroke-width="1.1" />
<path d="M1663.4 317 L1669.8 315.4 L1669.8 317.4 L1663.4 319 Z" fill="#000"/>
<path d="M1663.4 320.4 L1669.8 318.8 L1669.8 320.8 L1663.4 322.4 Z" fill="#000"/>
<line x1="1667.8" y1="316.9" x2="1667.8" y2="326.3" stroke="#000" stroke-width="1.1" />
<line x1="1670.4" y1="316.5" x2="1670.4" y2="325.9" stroke="#000" stroke-width="1.1" />
<path d="M1665.9 320.5 L1672.3 318.9 L1672.3 320.9 L1665.9 322.5 Z" fill="#000"/>
<path d="M1665.9 323.9 L1672.3 322.3 L1672.3 324.3 L1665.9 325.9 Z" fill="#000"/>
<rect x="1689.2" y="301.7" width="47.1" height="37" fill="#d9d9d9" rx="4.5"/>
<rect x="1689.2" y="300.9" width="47.1" height="37" fill="#fdfdfd" rx="4.5"/>
<line x1="1700.2" y1="312.5" x2="1725.2" y2="312.5" stroke="#111" stroke-width="1.2" />
<line x1="1700.2" y1="316.75" x2="1725.2" y2="316.75" stroke="#111" stroke-width="1.2" />
<line x1="1700.2" y1="321" x2="1725.2" y2="321" stroke="#111" stroke-width="1.2" />
<line x1="1700.2" y1="325.25" x2="1725.2" y2="325.25" stroke="#111" stroke-width="1.2" />
<line x1="1700.2" y1="329.5" x2="1725.2" y2="329.5" stroke="#111" stroke-width="1.2" />
<line x1="1702" y1="315" x2="1702" y2="327.5" stroke="#000" stroke-width="1.1" />
<path d="M1702 322.5 Q1706.8 319.6 1706.2 323.2 Q1705.4 325.8 1702 327.5" fill="none" stroke="#000" stroke-width="1.5"/>
<rect x="1585" y="344.9" width="47.1" height="36.9" fill="#d9d9d9" rx="4.5"/>
<rect x="1585" y="344.1" width="47.1" height="36.9" fill="#fdfdfd" rx="4.5"/>
<line x1="1596" y1="354.5" x2="1621" y2="354.5" stroke="#111" stroke-width="1.2" />
<line x1="1596" y1="358.75" x2="1621" y2="358.75" stroke="#111" stroke-width="1.2" />
<line x1="1596" y1="363" x2="1621" y2="363" stroke="#111" stroke-width="1.2" />
<line x1="1596" y1="367.25" x2="1621" y2="367.25" stroke="#111" stroke-width="1.2" />
<line x1="1596" y1="371.5" x2="1621" y2="371.5" stroke="#111" stroke-width="1.2" />
<line x1="1600.4" y1="350.5" x2="1600.4" y2="363" stroke="#000" stroke-width="1.1" />
<path d="M1600.4 358 Q1605.2 355.1 1604.6 358.7 Q1603.8 361.3 1600.4 363" fill="none" stroke="#000" stroke-width="1.5"/>
<rect x="1637.1" y="344.9" width="46.7" height="36.9" fill="#d9d9d9" rx="4.5"/>
<rect x="1637.1" y="344.1" width="46.7" height="36.9" fill="#fdfdfd" rx="4.5"/>
<line x1="1648.1" y1="354.5" x2="1673.1" y2="354.5" stroke="#111" stroke-width="1.2" />
<line x1="1648.1" y1="358.75" x2="1673.1" y2="358.75" stroke="#111" stroke-width="1.2" />
<line x1="1648.1" y1="363" x2="1673.1" y2="363" stroke="#111" stroke-width="1.2" />
<line x1="1648.1" y1="367.25" x2="1673.1" y2="367.25" stroke="#111" stroke-width="1.2" />
<line x1="1648.1" y1="371.5" x2="1673.1" y2="371.5" stroke="#111" stroke-width="1.2" />
<line x1="1652.5" y1="350.5" x2="1652.5" y2="363" stroke="#000" stroke-width="1.1" />
<path d="M1652.5 358 Q1657.3 355.1 1656.7 358.7 Q1655.9 361.3 1652.5 363" fill="none" stroke="#000" stroke-width="1.5"/>
<line x1="1657.1" y1="357" x2="1657.1" y2="369.5" stroke="#000" stroke-width="1.1" />
<path d="M1657.1 364.5 Q1661.9 361.6 1661.3 365.2 Q1660.5 367.8 1657.1 369.5" fill="none" stroke="#000" stroke-width="1.5"/>
<rect x="1689.2" y="344.9" width="47.1" height="36.9" fill="#d9d9d9" rx="4.5"/>
<rect x="1689.2" y="344.1" width="47.1" height="36.9" fill="#fdfdfd" rx="4.5"/>
<line x1="1700.2" y1="354.5" x2="1725.2" y2="354.5" stroke="#111" stroke-width="1.2" />
<line x1="1700.2" y1="358.75" x2="1725.2" y2="358.75" stroke="#111" stroke-width="1.2" />
<line x1="1700.2" y1="363" x2="1725.2" y2="363" stroke="#111" stroke-width="1.2" />
<line x1="1700.2" y1="367.25" x2="1725.2" y2="367.25" stroke="#111" stroke-width="1.2" />
<line x1="1700.2" y1="371.5" x2="1725.2" y2="371.5" stroke="#111" stroke-width="1.2" />
<line x1="1704.6" y1="350.5" x2="1704.6" y2="363" stroke="#000" stroke-width="1.1" />
<path d="M1704.6 358 Q1709.4 355.1 1708.8 358.7 Q1708 361.3 1704.6 363" fill="none" stroke="#000" stroke-width="1.5"/>
<line x1="1709.2" y1="357" x2="1709.2" y2="369.5" stroke="#000" stroke-width="1.1" />
<path d="M1709.2 364.5 Q1714 361.6 1713.4 365.2 Q1712.6 367.8 1709.2 369.5" fill="none" stroke="#000" stroke-width="1.5"/>
<line x1="1713.8" y1="352" x2="1713.8" y2="364.5" stroke="#000" stroke-width="1.1" />
<path d="M1713.8 359.5 Q1718.6 356.6 1718 360.2 Q1717.2 362.8 1713.8 364.5" fill="none" stroke="#000" stroke-width="1.5"/>
<rect x="1585" y="388" width="47.1" height="35.8" fill="#d9d9d9" rx="4.5"/>
<rect x="1585" y="387.2" width="47.1" height="35.8" fill="#fdfdfd" rx="4.5"/>
<line x1="1596" y1="397.3" x2="1621" y2="397.3" stroke="#111" stroke-width="1.2" />
<line x1="1596" y1="401.55" x2="1621" y2="401.55" stroke="#111" stroke-width="1.2" />
<line x1="1596" y1="405.8" x2="1621" y2="405.8" stroke="#111" stroke-width="1.2" />
<line x1="1596" y1="410.05" x2="1621" y2="410.05" stroke="#111" stroke-width="1.2" />
<line x1="1596" y1="414.3" x2="1621" y2="414.3" stroke="#111" stroke-width="1.2" />
<line x1="1600.4" y1="393.3" x2="1600.4" y2="405.8" stroke="#000" stroke-width="1.1" />
<path d="M1600.4 400.8 Q1605.2 397.9 1604.6 401.5 Q1603.8 404.1 1600.4 405.8" fill="none" stroke="#000" stroke-width="1.5"/>
<line x1="1605" y1="397.8" x2="1605" y2="410.3" stroke="#000" stroke-width="1.1" />
<path d="M1605 405.3 Q1609.8 402.4 1609.2 406 Q1608.4 408.6 1605 410.3" fill="none" stroke="#000" stroke-width="1.5"/>
<line x1="1609.6" y1="401.8" x2="1609.6" y2="414.3" stroke="#000" stroke-width="1.1" />
<path d="M1609.6 409.3 Q1614.4 406.4 1613.8 410 Q1613 412.6 1609.6 414.3" fill="none" stroke="#000" stroke-width="1.5"/>
<rect x="1637.1" y="388" width="46.7" height="35.8" fill="#d9d9d9" rx="4.5"/>
<rect x="1637.1" y="387.2" width="46.7" height="35.8" fill="#fdfdfd" rx="4.5"/>
<line x1="1648.1" y1="397.3" x2="1673.1" y2="397.3" stroke="#111" stroke-width="1.2" />
<line x1="1648.1" y1="401.55" x2="1673.1" y2="401.55" stroke="#111" stroke-width="1.2" />
<line x1="1648.1" y1="405.8" x2="1673.1" y2="405.8" stroke="#111" stroke-width="1.2" />
<line x1="1648.1" y1="410.05" x2="1673.1" y2="410.05" stroke="#111" stroke-width="1.2" />
<line x1="1648.1" y1="414.3" x2="1673.1" y2="414.3" stroke="#111" stroke-width="1.2" />
<line x1="1652.5" y1="393.3" x2="1652.5" y2="405.8" stroke="#000" stroke-width="1.1" />
<path d="M1652.5 400.8 Q1657.3 397.9 1656.7 401.5 Q1655.9 404.1 1652.5 405.8" fill="none" stroke="#000" stroke-width="1.5"/>
<line x1="1657.1" y1="397.8" x2="1657.1" y2="410.3" stroke="#000" stroke-width="1.1" />
<path d="M1657.1 405.3 Q1661.9 402.4 1661.3 406 Q1660.5 408.6 1657.1 410.3" fill="none" stroke="#000" stroke-width="1.5"/>
<line x1="1661.7" y1="401.8" x2="1661.7" y2="414.3" stroke="#000" stroke-width="1.1" />
<path d="M1661.7 409.3 Q1666.5 406.4 1665.9 410 Q1665.1 412.6 1661.7 414.3" fill="none" stroke="#000" stroke-width="1.5"/>
<line x1="1666.3" y1="395.8" x2="1666.3" y2="408.3" stroke="#000" stroke-width="1.1" />
<path d="M1666.3 403.3 Q1671.1 400.4 1670.5 404 Q1669.7 406.6 1666.3 408.3" fill="none" stroke="#000" stroke-width="1.5"/>
<rect x="1689.2" y="388" width="47.1" height="35.8" fill="#d9d9d9" rx="4.5"/>
<rect x="1689.2" y="387.2" width="47.1" height="35.8" fill="#fdfdfd" rx="4.5"/>
<line x1="1700.2" y1="397.3" x2="1725.2" y2="397.3" stroke="#111" stroke-width="1.2" />
<line x1="1700.2" y1="401.55" x2="1725.2" y2="401.55" stroke="#111" stroke-width="1.2" />
<line x1="1700.2" y1="405.8" x2="1725.2" y2="405.8" stroke="#111" stroke-width="1.2" />
<line x1="1700.2" y1="410.05" x2="1725.2" y2="410.05" stroke="#111" stroke-width="1.2" />
<line x1="1700.2" y1="414.3" x2="1725.2" y2="414.3" stroke="#111" stroke-width="1.2" />
<line x1="1704.6" y1="393.3" x2="1704.6" y2="405.8" stroke="#000" stroke-width="1.1" />
<path d="M1704.6 400.8 Q1709.4 397.9 1708.8 401.5 Q1708 404.1 1704.6 405.8" fill="none" stroke="#000" stroke-width="1.5"/>
<line x1="1709.2" y1="397.8" x2="1709.2" y2="410.3" stroke="#000" stroke-width="1.1" />
<path d="M1709.2 405.3 Q1714 402.4 1713.4 406 Q1712.6 408.6 1709.2 410.3" fill="none" stroke="#000" stroke-width="1.5"/>
<line x1="1713.8" y1="401.8" x2="1713.8" y2="414.3" stroke="#000" stroke-width="1.1" />
<path d="M1713.8 409.3 Q1718.6 406.4 1718 410 Q1717.2 412.6 1713.8 414.3" fill="none" stroke="#000" stroke-width="1.5"/>
<line x1="1718.4" y1="395.8" x2="1718.4" y2="408.3" stroke="#000" stroke-width="1.1" />
<path d="M1718.4 403.3 Q1723.2 400.4 1722.6 404 Q1721.8 406.6 1718.4 408.3" fill="none" stroke="#000" stroke-width="1.5"/>
<line x1="1723" y1="403.8" x2="1723" y2="416.3" stroke="#000" stroke-width="1.1" />
<path d="M1723 411.3 Q1727.8 408.4 1727.2 412 Q1726.4 414.6 1723 416.3" fill="none" stroke="#000" stroke-width="1.5"/>
<rect x="1576.9" y="249" width="168" height="19.5" fill="#ebebeb"/>
<rect x="1580.9" y="253.2" width="170.7" height="15.5" fill="#ffffff" stroke="#d6d6d6" stroke-width="0.6" rx="4"/>
<text x="1587.5" y="264.2" font-size="10.9" fill="#222" text-anchor="start" font-weight="normal" font-family="Liberation Sans" font-style="normal" stroke="#222" stroke-width="0.25" >Pedal Lines</text>
<rect x="1737.2" y="254" width="14.4" height="13.3" fill="#1a74ee" rx="3"/>
<path d="M1741.4 259.3L1744.4 262.5L1747.4 259.3" fill="none" stroke="#fff" stroke-width="1.4" stroke-linecap="round" stroke-linejoin="round"/>
<rect x="1577.2" y="432" width="167" height="27.6" fill="url(#gHdr)"/>
<path d="M1581.5 442.8 L1587.3 442.8 L1584.4 448.3 Z" fill="#f2f2f2"/>
<text x="1592.7" y="450" font-size="10.7" fill="#f7f7f7" text-anchor="start" font-weight="bold" font-family="Liberation Sans" font-style="normal" stroke="#f7f7f7" stroke-width="0.25" >Time Signature</text>
<g stroke="#f0f0f0" stroke-width="1.2" fill="none" stroke-linecap="round">
<path d="M1726.5 441.5 V449 M1724.5 447 L1726.5 449 L1728.5 447 M1736 449 V441.5 M1734 443.5 L1736 441.5 L1738 443.5"/>
</g>
<rect x="1585" y="468.7" width="47.1" height="36" fill="#d9d9d9" rx="4.5"/>
<rect x="1585" y="467.9" width="47.1" height="36" fill="#fdfdfd" rx="4.5"/>
<line x1="1596.3" y1="477.4" x2="1621.1" y2="477.4" stroke="#111" stroke-width="1.1" />
<line x1="1596.3" y1="481.65" x2="1621.1" y2="481.65" stroke="#111" stroke-width="1.1" />
<line x1="1596.3" y1="485.9" x2="1621.1" y2="485.9" stroke="#111" stroke-width="1.1" />
<line x1="1596.3" y1="490.15" x2="1621.1" y2="490.15" stroke="#111" stroke-width="1.1" />
<line x1="1596.3" y1="494.4" x2="1621.1" y2="494.4" stroke="#111" stroke-width="1.1" />
<text x="1608.7" y="486.8" font-size="11.5" fill="#000" text-anchor="middle" font-weight="bold" font-family="Liberation Serif" font-style="normal" >4</text>
<text x="1608.7" y="495.3" font-size="11.5" fill="#000" text-anchor="middle" font-weight="bold" font-family="Liberation Serif" font-style="normal" >4</text>
<rect x="1637.1" y="468.7" width="46.7" height="36" fill="#d9d9d9" rx="4.5"/>
<rect x="1637.1" y="467.9" width="46.7" height="36" fill="#fdfdfd" rx="4.5"/>
<line x1="1648.4" y1="477.4" x2="1673.2" y2="477.4" stroke="#111" stroke-width="1.1" />
<line x1="1648.4" y1="481.65" x2="1673.2" y2="481.65" stroke="#111" stroke-width="1.1" />
<line x1="1648.4" y1="485.9" x2="1673.2" y2="485.9" stroke="#111" stroke-width="1.1" />
<line x1="1648.4" y1="490.15" x2="1673.2" y2="490.15" stroke="#111" stroke-width="1.1" />
<line x1="1648.4" y1="494.4" x2="1673.2" y2="494.4" stroke="#111" stroke-width="1.1" />
<text x="1660.8" y="486.8" font-size="11.5" fill="#000" text-anchor="middle" font-weight="bold" font-family="Liberation Serif" font-style="normal" >3</text>
<text x="1660.8" y="495.3" font-size="11.5" fill="#000" text-anchor="middle" font-weight="bold" font-family="Liberation Serif" font-style="normal" >4</text>
<rect x="1689.2" y="468.7" width="47.1" height="36" fill="#d9d9d9" rx="4.5"/>
<rect x="1689.2" y="467.9" width="47.1" height="36" fill="#fdfdfd" rx="4.5"/>
<line x1="1700.5" y1="477.4" x2="1725.3" y2="477.4" stroke="#111" stroke-width="1.1" />
<line x1="1700.5" y1="481.65" x2="1725.3" y2="481.65" stroke="#111" stroke-width="1.1" />
<line x1="1700.5" y1="485.9" x2="1725.3" y2="485.9" stroke="#111" stroke-width="1.1" />
<line x1="1700.5" y1="490.15" x2="1725.3" y2="490.15" stroke="#111" stroke-width="1.1" />
<line x1="1700.5" y1="494.4" x2="1725.3" y2="494.4" stroke="#111" stroke-width="1.1" />
<text x="1712.9" y="486.8" font-size="11.5" fill="#000" text-anchor="middle" font-weight="bold" font-family="Liberation Serif" font-style="normal" >2</text>
<text x="1712.9" y="495.3" font-size="11.5" fill="#000" text-anchor="middle" font-weight="bold" font-family="Liberation Serif" font-style="normal" >4</text>
<rect x="1585" y="510.6" width="47.1" height="36.8" fill="#d9d9d9" rx="4.5"/>
<rect x="1585" y="509.8" width="47.1" height="36.8" fill="#fdfdfd" rx="4.5"/>
<line x1="1596.3" y1="519.3" x2="1621.1" y2="519.3" stroke="#111" stroke-width="1.1" />
<line x1="1596.3" y1="523.55" x2="1621.1" y2="523.55" stroke="#111" stroke-width="1.1" />
<line x1="1596.3" y1="527.8" x2="1621.1" y2="527.8" stroke="#111" stroke-width="1.1" />
<line x1="1596.3" y1="532.05" x2="1621.1" y2="532.05" stroke="#111" stroke-width="1.1" />
<line x1="1596.3" y1="536.3" x2="1621.1" y2="536.3" stroke="#111" stroke-width="1.1" />
<text x="1608.7" y="528.7" font-size="11.5" fill="#000" text-anchor="middle" font-weight="bold" font-family="Liberation Serif" font-style="normal" >2</text>
<text x="1608.7" y="537.2" font-size="11.5" fill="#000" text-anchor="middle" font-weight="bold" font-family="Liberation Serif" font-style="normal" >2</text>
<rect x="1637.1" y="510.6" width="46.7" height="36.8" fill="#d9d9d9" rx="4.5"/>
<rect x="1637.1" y="509.8" width="46.7" height="36.8" fill="#fdfdfd" rx="4.5"/>
<line x1="1648.4" y1="519.3" x2="1673.2" y2="519.3" stroke="#111" stroke-width="1.1" />
<line x1="1648.4" y1="523.55" x2="1673.2" y2="523.55" stroke="#111" stroke-width="1.1" />
<line x1="1648.4" y1="527.8" x2="1673.2" y2="527.8" stroke="#111" stroke-width="1.1" />
<line x1="1648.4" y1="532.05" x2="1673.2" y2="532.05" stroke="#111" stroke-width="1.1" />
<line x1="1648.4" y1="536.3" x2="1673.2" y2="536.3" stroke="#111" stroke-width="1.1" />
<text x="1660.8" y="528.7" font-size="11.5" fill="#000" text-anchor="middle" font-weight="bold" font-family="Liberation Serif" font-style="normal" >6</text>
<text x="1660.8" y="537.2" font-size="11.5" fill="#000" text-anchor="middle" font-weight="bold" font-family="Liberation Serif" font-style="normal" >8</text>
<rect x="1689.2" y="510.6" width="47.1" height="36.8" fill="#d9d9d9" rx="4.5"/>
<rect x="1689.2" y="509.8" width="47.1" height="36.8" fill="#fdfdfd" rx="4.5"/>
<line x1="1700.5" y1="519.3" x2="1725.3" y2="519.3" stroke="#111" stroke-width="1.1" />
<line x1="1700.5" y1="523.55" x2="1725.3" y2="523.55" stroke="#111" stroke-width="1.1" />
<line x1="1700.5" y1="527.8" x2="1725.3" y2="527.8" stroke="#111" stroke-width="1.1" />
<line x1="1700.5" y1="532.05" x2="1725.3" y2="532.05" stroke="#111" stroke-width="1.1" />
<line x1="1700.5" y1="536.3" x2="1725.3" y2="536.3" stroke="#111" stroke-width="1.1" />
<text x="1712.9" y="532.1" font-size="12" fill="#000" text-anchor="middle" font-weight="bold" font-family="Liberation Serif" font-style="normal" >C</text>
<rect x="1585" y="553.1" width="47.1" height="37.7" fill="#d9d9d9" rx="4.5"/>
<rect x="1585" y="552.3" width="47.1" height="37.7" fill="#fdfdfd" rx="4.5"/>
<line x1="1596.3" y1="561.8" x2="1621.1" y2="561.8" stroke="#111" stroke-width="1.1" />
<line x1="1596.3" y1="566.05" x2="1621.1" y2="566.05" stroke="#111" stroke-width="1.1" />
<line x1="1596.3" y1="570.3" x2="1621.1" y2="570.3" stroke="#111" stroke-width="1.1" />
<line x1="1596.3" y1="574.55" x2="1621.1" y2="574.55" stroke="#111" stroke-width="1.1" />
<line x1="1596.3" y1="578.8" x2="1621.1" y2="578.8" stroke="#111" stroke-width="1.1" />
<text x="1608.7" y="574.6" font-size="12" fill="#000" text-anchor="middle" font-weight="bold" font-family="Liberation Serif" font-style="normal" >C</text>
<line x1="1609.2" y1="559.8" x2="1609.2" y2="580.8" stroke="#000" stroke-width="1" />
<rect x="1637.1" y="553.1" width="46.7" height="37.7" fill="#d9d9d9" rx="4.5"/>
<rect x="1637.1" y="552.3" width="46.7" height="37.7" fill="#fdfdfd" rx="4.5"/>
<line x1="1648.4" y1="561.8" x2="1673.2" y2="561.8" stroke="#111" stroke-width="1.1" />
<line x1="1648.4" y1="566.05" x2="1673.2" y2="566.05" stroke="#111" stroke-width="1.1" />
<line x1="1648.4" y1="570.3" x2="1673.2" y2="570.3" stroke="#111" stroke-width="1.1" />
<line x1="1648.4" y1="574.55" x2="1673.2" y2="574.55" stroke="#111" stroke-width="1.1" />
<line x1="1648.4" y1="578.8" x2="1673.2" y2="578.8" stroke="#111" stroke-width="1.1" />
<line x1="1655.8" y1="563.8" x2="1665.8" y2="576.8" stroke="#000" stroke-width="1.3" />
<line x1="1655.8" y1="576.8" x2="1665.8" y2="563.8" stroke="#000" stroke-width="1.3" />
<rect x="1648.4" y="561.2" width="24.8" height="1.2" fill="#000"/>
<rect x="1648.4" y="578.2" width="24.8" height="1.2" fill="#000"/>
<rect x="1577.2" y="598.3" width="167" height="27.6" fill="url(#gHdr)"/>
<path d="M1581.5 609.1 L1587.3 609.1 L1584.4 614.6 Z" fill="#f2f2f2"/>
<text x="1592.7" y="616.3" font-size="10.7" fill="#f7f7f7" text-anchor="start" font-weight="bold" font-family="Liberation Sans" font-style="normal" stroke="#f7f7f7" stroke-width="0.25" >Octave Lines</text>
<g stroke="#f0f0f0" stroke-width="1.2" fill="none" stroke-linecap="round">
<path d="M1726.5 607.8 V615.3 M1724.5 613.3 L1726.5 615.3 L1728.5 613.3 M1736 615.3 V607.8 M1734 609.8 L1736 607.8 L1738 609.8"/>
</g>
<rect x="1585" y="634.6" width="72.9" height="36.6" fill="#d9d9d9" rx="4.5"/>
<rect x="1585" y="633.8" width="72.9" height="36.6" fill="#fdfdfd" rx="4.5"/>
<rect x="1663.3" y="634.6" width="72.5" height="36.6" fill="#d9d9d9" rx="4.5"/>
<rect x="1663.3" y="633.8" width="72.5" height="36.6" fill="#fdfdfd" rx="4.5"/>
<rect x="1585" y="677.8" width="72.9" height="36.3" fill="#d9d9d9" rx="4.5"/>
<rect x="1585" y="677" width="72.9" height="36.3" fill="#fdfdfd" rx="4.5"/>
<rect x="1663.3" y="677.8" width="72.5" height="36.3" fill="#d9d9d9" rx="4.5"/>
<rect x="1663.3" y="677" width="72.5" height="36.3" fill="#fdfdfd" rx="4.5"/>
<text x="1598.8" y="658.7" font-size="18.5" fill="#111" text-anchor="middle" font-weight="normal" font-family="Liberation Serif" font-style="normal" >8</text>
<text x="1608.3" y="652.4" font-size="10" fill="#111" text-anchor="middle" font-weight="normal" font-family="Liberation Serif" font-style="italic" >va</text>
<line x1="1614" y1="646.4" x2="1646.7" y2="646.4" stroke="#111" stroke-width="1.3" stroke-dasharray="2 1.2"/>
<line x1="1647.5" y1="645.8" x2="1647.5" y2="658.8" stroke="#111" stroke-width="1.5" />
<text x="1677.2" y="658.7" font-size="18.5" fill="#111" text-anchor="middle" font-weight="normal" font-family="Liberation Serif" font-style="normal" >8</text>
<text x="1687.6" y="652.4" font-size="10" fill="#111" text-anchor="middle" font-weight="normal" font-family="Liberation Serif" font-style="italic" >vb</text>
<line x1="1682" y1="657.9" x2="1726" y2="657.9" stroke="#111" stroke-width="1.3" stroke-dasharray="2 1.2"/>
<line x1="1726" y1="645.8" x2="1726" y2="658.6" stroke="#111" stroke-width="1.5" />
<text x="1601.5" y="700.8" font-size="18.5" fill="#111" text-anchor="middle" font-weight="normal" font-family="Liberation Serif" font-style="" letter-spacing="-1">15</text>
<text x="1615.2" y="694.5" font-size="10" fill="#111" text-anchor="middle" font-weight="normal" font-family="Liberation Serif" font-style="italic" >ma</text>
<line x1="1621" y1="688.9" x2="1646.7" y2="688.9" stroke="#111" stroke-width="1.3" stroke-dasharray="2 1.2"/>
<line x1="1647.5" y1="688.4" x2="1647.5" y2="701.3" stroke="#111" stroke-width="1.5" />
<text x="1679.8" y="700.8" font-size="18.5" fill="#111" text-anchor="middle" font-weight="normal" font-family="Liberation Serif" font-style="" letter-spacing="-1">15</text>
<text x="1693.8" y="694.5" font-size="10" fill="#111" text-anchor="middle" font-weight="normal" font-family="Liberation Serif" font-style="italic" >mb</text>
<line x1="1686" y1="700.4" x2="1726" y2="700.4" stroke="#111" stroke-width="1.3" stroke-dasharray="2 1.2"/>
<line x1="1726" y1="688.6" x2="1726" y2="701" stroke="#111" stroke-width="1.5" />
<rect x="1577.2" y="722" width="167" height="27.6" fill="url(#gHdr)"/>
<path d="M1581.5 732.8 L1587.3 732.8 L1584.4 738.3 Z" fill="#f2f2f2"/>
<text x="1592.7" y="740" font-size="10.7" fill="#f7f7f7" text-anchor="start" font-weight="bold" font-family="Liberation Sans" font-style="normal" stroke="#f7f7f7" stroke-width="0.25" >Pedal Lines</text>
<g stroke="#f0f0f0" stroke-width="1.2" fill="none" stroke-linecap="round">
<path d="M1726.5 731.5 V739 M1724.5 737 L1726.5 739 L1728.5 737 M1736 739 V731.5 M1734 733.5 L1736 731.5 L1738 733.5"/>
</g>
<rect x="1585" y="758.3" width="72.9" height="36.3" fill="#d9d9d9" rx="4.5"/>
<rect x="1585" y="757.5" width="72.9" height="36.3" fill="#fdfdfd" rx="4.5"/>
<rect x="1663.3" y="758.3" width="72.5" height="36.3" fill="#d9d9d9" rx="4.5"/>
<rect x="1663.3" y="757.5" width="72.5" height="36.3" fill="#fdfdfd" rx="4.5"/>
<rect x="1585" y="801.4" width="72.9" height="36.3" fill="#d9d9d9" rx="4.5"/>
<rect x="1585" y="800.6" width="72.9" height="36.3" fill="#fdfdfd" rx="4.5"/>
<rect x="1663.3" y="801.4" width="72.5" height="36.3" fill="#d9d9d9" rx="4.5"/>
<rect x="1663.3" y="800.6" width="72.5" height="36.3" fill="#fdfdfd" rx="4.5"/>
<rect x="1585" y="843.9" width="72.9" height="35.7" fill="#d9d9d9" rx="4.5"/>
<rect x="1585" y="843.1" width="72.9" height="35.7" fill="#fdfdfd" rx="4.5"/>
<text x="1607.6" y="780.6" font-size="11.88" fill="#111" text-anchor="start" font-weight="normal" font-family="Liberation Serif" font-style="italic" letter-spacing="-0.8">Ped.</text>
<path d="M1624.5 780.6 L1635 780.6 L1635 777.5" fill="none" stroke="#111" stroke-width="1.2"/>
<text x="1686.7" y="780.6" font-size="11.88" fill="#111" text-anchor="start" font-weight="normal" font-family="Liberation Serif" font-style="italic" letter-spacing="-0.8">Ped.</text>
<circle cx="1710" cy="777.6" r="2.2" fill="#333" />
<text x="1594.8" y="823.6" font-size="15" fill="#111" text-anchor="start" font-weight="normal" font-family="Liberation Serif" font-style="italic" letter-spacing="-0.8">Ped.</text>
<path d="M1614 823.4 L1646 823.4 L1648 819.4" fill="none" stroke="#111" stroke-width="1.6"/>
<path d="M1674.4 816.3 L1677.4 820.6 L1723.8 820.6 L1726.4 816.3" fill="none" stroke="#111" stroke-width="1.8"/>
<path d="M1609.4 859.7 L1610.8 863.6 L1635 863.6 L1635 859.7" fill="none" stroke="#222" stroke-width="1.3"/>
<rect x="1577.2" y="888" width="167" height="9" fill="url(#gHdr)"/>
<rect x="278" y="828" width="1274.5" height="69" fill="#e9e9e9"/>
<rect x="278" y="825.8" width="1262" height="2.2" fill="#ffffff"/>
<line x1="277.7" y1="853.2" x2="1552" y2="853.2" stroke="#cdcdcd" stroke-width="1" />
<path d="M833.8 853.2 L843.8 828.8 L987.5 828.8 L997.5 853.2" fill="#ececec" stroke="#b9b9b9" stroke-width="1"/>
<text x="872.5" y="845.2" font-size="10.3" fill="#1e1e1e" text-anchor="start" font-weight="normal" font-family="Liberation Sans" font-style="normal" stroke="#1e1e1e" stroke-width="0.25" >Hide Play Controls</text>
<path d="M849.5 839.6 L853.8 843.6 L858 839.6" fill="none" stroke="#b0b0b0" stroke-width="0.9"/>
<path d="M972.8 839.6 L977 843.6 L981.2 839.6" fill="none" stroke="#b0b0b0" stroke-width="0.9"/>
<rect x="286.9" y="858.4" width="111.1" height="35.1" fill="#d6d6d6" rx="4.5"/>
<rect x="286.9" y="857.6" width="111.1" height="35.1" fill="#fdfdfd" rx="4.5"/>
<line x1="385.3" y1="857.6" x2="385.3" y2="892.7" stroke="#dadada" stroke-width="1" />
<ellipse cx="296.5" cy="880.2" rx="3.2" ry="2.4" fill="#111" transform="rotate(-22 296.5 880.2)" />
<line x1="299.2" y1="866.5" x2="299.2" y2="880" stroke="#111" stroke-width="1.1" />
<circle cx="303.6" cy="880.6" r="0.9" fill="#111" />
<text x="315.7" y="878.8" font-size="10.75" fill="#1e1e1e" text-anchor="start" font-weight="normal" font-family="Liberation Sans" font-style="normal" stroke="#1e1e1e" stroke-width="0.25" >= 120 BPM</text>
<path d="M389.5 872.3 L395.2 872.3 L392.35 878 Z" fill="#111"/>
<rect x="407.8" y="858.4" width="111.2" height="35.1" fill="#d6d6d6" rx="4.5"/>
<rect x="407.8" y="857.6" width="111.2" height="35.1" fill="#fdfdfd" rx="4.5"/>
<line x1="506.3" y1="857.6" x2="506.3" y2="892.7" stroke="#dadada" stroke-width="1" />
<circle cx="428.2" cy="875.2" r="11.2" fill="#4cbb5d" stroke="#181818" stroke-width="1.9" />
<path d="M428.2 875.2 L428.2 864.8 A10.4 10.4 0 0 0 420.8 882.6 Z" fill="#ffffff"/>
<line x1="428.2" y1="875.2" x2="421.4" y2="882" stroke="#181818" stroke-width="1.5" />
<text x="456.4" y="878.8" font-size="10.7" fill="#1e1e1e" text-anchor="start" font-weight="normal" font-family="Liberation Sans" font-style="normal" stroke="#1e1e1e" stroke-width="0.25" >100%</text>
<path d="M510.6 872.3 L516.3 872.3 L513.45 878 Z" fill="#111"/>
<rect x="812.5" y="858.3" width="36.3" height="35" fill="#d6d6d6" rx="4.5"/>
<rect x="812.5" y="857.5" width="36.3" height="35" fill="#ffffff" rx="4.5"/>
<path d="M825.3 868.8 L836.2 875 L825.3 881.2 Z" fill="url(#gPlay)"/>
<rect x="859.4" y="858.3" width="35" height="35" fill="#d6d6d6" rx="4.5"/>
<rect x="859.4" y="857.5" width="35" height="35" fill="#f1f1f3" rx="4.5"/>
<rect x="870.3" y="869" width="10.7" height="11.8" fill="#dcdcdf"/>
<rect x="903.8" y="856" width="126.8" height="38.4" fill="#ffffff"/>
<text x="966.9" y="881.3" font-size="17.2" fill="#6a6a6a" text-anchor="middle" font-weight="bold" font-family="Liberation Sans" font-style="normal" letter-spacing="0.55">0:00:00.000</text>
<rect x="1323.1" y="858.3" width="35" height="34.4" fill="#d6d6d6" rx="4.5"/>
<rect x="1323.1" y="857.5" width="35" height="34.4" fill="#fdfdfd" rx="4.5"/>
<rect x="1368.75" y="858.3" width="36" height="34.4" fill="#d6d6d6" rx="4.5"/>
<rect x="1368.75" y="857.5" width="36" height="34.4" fill="#0f78f6" rx="4.5"/>
<rect x="1415" y="858.3" width="35.6" height="34.4" fill="#d6d6d6" rx="4.5"/>
<rect x="1415" y="857.5" width="35.6" height="34.4" fill="#0f78f6" rx="4.5"/>
<rect x="1461" y="858.3" width="35.5" height="34.4" fill="#d6d6d6" rx="4.5"/>
<rect x="1461" y="857.5" width="35.5" height="34.4" fill="#fdfdfd" rx="4.5"/>
<rect x="1506.9" y="858.3" width="35" height="34.4" fill="#d6d6d6" rx="4.5"/>
<rect x="1506.9" y="857.5" width="35" height="34.4" fill="#fdfdfd" rx="4.5"/>
<g transform="translate(1340.6 874.6) rotate(40)"><ellipse cx="0" cy="3" rx="3.6" ry="4.4" fill="#a0643a"/><ellipse cx="0" cy="-1.5" rx="2.6" ry="2.6" fill="#b9784a"/><rect x="-0.6" y="-10" width="1.3" height="7" fill="#2a1a10"/></g>
<circle cx="1380.5" cy="872.5" r="1.2" fill="#0b2a66" />
<circle cx="1380.5" cy="877.5" r="1.2" fill="#0b2a66" />
<circle cx="1392.5" cy="872.5" r="1.2" fill="#0b2a66" />
<circle cx="1392.5" cy="877.5" r="1.2" fill="#0b2a66" />
<line x1="1384" y1="866.5" x2="1384" y2="883.5" stroke="#0b2a66" stroke-width="1.1" />
<line x1="1386.6" y1="866.5" x2="1386.6" y2="883.5" stroke="#0b2a66" stroke-width="2.2" />
<line x1="1389.2" y1="866.5" x2="1389.2" y2="883.5" stroke="#0b2a66" stroke-width="1.1" />
<ellipse cx="1429" cy="879.5" rx="3.6" ry="2.6" fill="#0b2a66" transform="rotate(-22 1429 879.5)" />
<line x1="1431.8" y1="866" x2="1431.8" y2="879" stroke="#0b2a66" stroke-width="1.1" />
<path d="M1432 876 L1432 884 L1434 882 L1436 885.5 L1437.2 885 L1435.4 881.6 L1438 881.4 Z" fill="#ffffff" stroke="#222" stroke-width="0.5"/>
<text x="1439.5" y="877.5" font-size="6.5" fill="#0b2a66" text-anchor="middle" font-weight="normal" font-family="Liberation Sans" font-style="normal" stroke="#0b2a66" stroke-width="0.25" >0</text>
<path d="M1474.6 883.5 L1477.6 866.5 L1481 866.5 L1484 883.5 Z" fill="#a48a6a" stroke="#6b5235" stroke-width="0.7"/>
<path d="M1476 880 L1482.6 880" fill="none" stroke="#6b5235" stroke-width="1"/>
<line x1="1479.3" y1="881" x2="1481.6" y2="869" stroke="#4a3a28" stroke-width="1" />
<path d="M1517.6 883.5 L1520.4 866.5 L1523.6 866.5 L1526.4 883.5 Z" fill="#9a5a35" stroke="#5a3520" stroke-width="0.7"/>
<rect x="1524" y="873.5" width="6.5" height="6" fill="#ffffff" stroke="#333" stroke-width="0.6"/>
<path d="M1530.5 873.5 L1534 870 L1534 883 L1530.5 879.5 Z" fill="#444"/>
<rect x="164" y="897" width="1592" height="34" fill="#fdeb7b"/>
<line x1="164" y1="897.5" x2="1756" y2="897.5" stroke="#efd768" stroke-width="1" />
<text x="878.5" y="918.1" font-size="10.2" fill="#1a1a1a" text-anchor="middle" font-weight="normal" font-family="Liberation Sans" font-style="normal" stroke="#1a1a1a" stroke-width="0.25" >Use SHIFT + arrow keys to move the selected note(s).</text>
<rect x="1024.5" y="906.2" width="100.2" height="16.6" fill="#f2f2f2" stroke="#a8a8a8" stroke-width="0.8"/>
<text x="1074.6" y="918.1" font-size="10.5" fill="#111" text-anchor="middle" font-weight="normal" font-family="Liberation Sans" font-style="normal" stroke="#111" stroke-width="0.25" >Got It</text>
<line x1="1730.4" y1="908.7" x2="1742.2" y2="920.5" stroke="#c8b646" stroke-width="2" />
<line x1="1730.4" y1="920.5" x2="1742.2" y2="908.7" stroke="#c8b646" stroke-width="2" />
<path d="M164 931 H1756 V947 Q1756 955 1748 955 H172 Q164 955 164 947 Z" fill="url(#gStatus)"/>
<text x="171.8" y="947.1" font-size="10.36" fill="#1e1e1e" text-anchor="start" font-weight="normal" font-family="Liberation Sans" font-style="normal" stroke="#1e1e1e" stroke-width="0.25" >Crescendo Masters v 11.28 © NCH Software</text>
<text x="702.5" y="947.1" font-size="10.26" fill="#1e1e1e" text-anchor="start" font-weight="normal" font-family="Liberation Sans" font-style="normal" stroke="#1e1e1e" stroke-width="0.25" >No MIDI Device Selected</text>
<rect x="1469" y="933.5" width="78.5" height="15.9" fill="#ffffff" stroke="#cfcfcf" stroke-width="0.5" rx="3"/>
<text x="1474.5" y="945.5" font-size="10.6" fill="#222" text-anchor="start" font-weight="normal" font-family="Liberation Sans" font-style="normal" stroke="#222" stroke-width="0.25" >256%</text>
<rect x="1533.7" y="934.3" width="13.8" height="14.4" fill="#1a74ee" rx="3"/>
<path d="M1537.8 940.2L1540.6 943.2L1543.4 940.2" fill="none" stroke="#fff" stroke-width="1.4" stroke-linecap="round" stroke-linejoin="round"/>
<circle cx="1567.3" cy="942" r="6.6" fill="#e4e4e4" stroke="#8a8a8a" stroke-width="0.9" />
<line x1="1563.8" y1="942" x2="1570.8" y2="942" stroke="#333" stroke-width="1.5" />
<line x1="1586" y1="942.3" x2="1728.4" y2="942.3" stroke="#bdbdbd" stroke-width="2" />
<line x1="1599.5" y1="947.5" x2="1599.5" y2="950" stroke="#a9a9a9" stroke-width="0.8" />
<line x1="1631.5" y1="947.5" x2="1631.5" y2="950" stroke="#a9a9a9" stroke-width="0.8" />
<line x1="1663.3" y1="947.5" x2="1663.3" y2="950" stroke="#a9a9a9" stroke-width="0.8" />
<line x1="1695" y1="947.5" x2="1695" y2="950" stroke="#a9a9a9" stroke-width="0.8" />
<line x1="1727" y1="947.5" x2="1727" y2="950" stroke="#a9a9a9" stroke-width="0.8" />
<rect x="1671.6" y="934.7" width="5.8" height="19.5" fill="#ffffff" stroke="#cfcfcf" stroke-width="0.5" rx="2.9"/>
<circle cx="1746.2" cy="942" r="6.6" fill="#e4e4e4" stroke="#8a8a8a" stroke-width="0.9" />
<line x1="1742.7" y1="942" x2="1749.7" y2="942" stroke="#222" stroke-width="1.6" />
<line x1="1746.2" y1="938.5" x2="1746.2" y2="945.5" stroke="#222" stroke-width="1.6" />
</svg></body></html>
